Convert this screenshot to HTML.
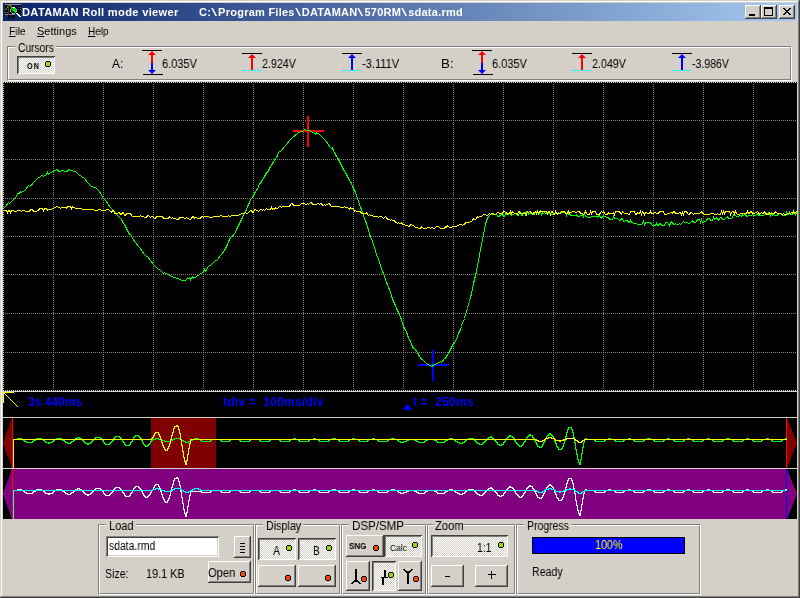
<!DOCTYPE html>
<html><head><meta charset="utf-8"><style>
html,body{margin:0;padding:0;width:800px;height:598px;overflow:hidden;background:#d4d0c8}
body>div,body>span,body>svg{position:absolute}
.t{position:absolute;font-family:"Liberation Sans",sans-serif;font-size:11px;line-height:13px;white-space:pre;color:#000;will-change:transform}
.dith{background:repeating-conic-gradient(#fff 0 25%,#d4d0c8 0 50%) 1px 0/2px 2px fixed}
u{text-decoration:underline;text-underline-offset:1px}
</style></head><body>
<div style="left:0px;top:0px;width:800px;height:598px;background:#d4d0c8;"></div><div style="left:1px;top:1px;width:797px;height:1px;background:#ffffff;"></div><div style="left:1px;top:1px;width:1px;height:596px;background:#ffffff;"></div><div style="left:799px;top:0px;width:1px;height:598px;background:#404040;"></div><div style="left:0px;top:597px;width:800px;height:1px;background:#404040;"></div><div style="left:798px;top:1px;width:1px;height:596px;background:#808080;"></div><div style="left:1px;top:596px;width:798px;height:1px;background:#808080;"></div><div style="left:3px;top:3px;width:794px;height:18px;background:linear-gradient(90deg,#0a246a,#a6caf0);"></div><span class="t" style="left:21.99px;top:6px;font-size:11px;color:#fff;font-weight:bold;letter-spacing:0.3px;transform:scaleX(1.0131);transform-origin:0 0;">DATAMAN Roll mode viewer</span><span class="t" style="left:199.00px;top:6px;font-size:11px;color:#fff;font-weight:bold;letter-spacing:0.25px;">C:<span style="display:inline-block;width:7px;text-align:center;font-weight:normal;transform:scaleX(1.9)">\</span>Program Files<span style="display:inline-block;width:7px;text-align:center;font-weight:normal;transform:scaleX(1.9)">\</span>DATAMAN<span style="display:inline-block;width:7px;text-align:center;font-weight:normal;transform:scaleX(1.9)">\</span>570RM<span style="display:inline-block;width:7px;text-align:center;font-weight:normal;transform:scaleX(1.9)">\</span>sdata.rmd</span><svg style="left:5px;top:4px" width="16" height="16" viewBox="0 0 16 16" shape-rendering="crispEdges"><rect x="0" y="0" width="16" height="1" fill="#8c8c84"/><rect x="0" y="1" width="16" height="9" fill="#000"/><rect x="0" y="10" width="10" height="1" fill="#8c8c84"/><rect x="13" y="3" width="1" height="1" fill="#606060"/><rect x="15" y="3" width="1" height="1" fill="#606060"/><rect x="13" y="5" width="1" height="1" fill="#606060"/><rect x="15" y="5" width="1" height="1" fill="#606060"/><rect x="0" y="8" width="1" height="1" fill="#606060"/><rect x="2" y="8" width="1" height="1" fill="#606060"/><rect x="3" y="1" width="1" height="10" fill="#c00000"/><rect x="11" y="1" width="1" height="4" fill="#0000c0"/><rect x="0" y="5" width="1" height="1" fill="#00b000"/><rect x="1" y="4" width="1" height="1" fill="#00b000"/><rect x="1" y="5" width="1" height="1" fill="#00b000"/><rect x="2" y="3" width="1" height="1" fill="#00b000"/><rect x="2" y="2" width="1" height="1" fill="#00b000"/><rect x="4" y="1" width="1" height="1" fill="#00b000"/><rect x="5" y="1" width="1" height="1" fill="#00b000"/><rect x="5" y="2" width="1" height="1" fill="#00b000"/><rect x="6" y="2" width="1" height="1" fill="#00b000"/><rect x="6" y="3" width="1" height="1" fill="#00b000"/><rect x="7" y="3" width="1" height="1" fill="#00b000"/><rect x="6" y="4" width="5" height="5" fill="#102010"/><rect x="5" y="5" width="7" height="3" fill="#102010"/><rect x="6" y="4" width="1" height="1" fill="#40c8c8"/><rect x="7" y="3" width="1" height="1" fill="#40c8c8"/><rect x="8" y="3" width="1" height="1" fill="#40c8c8"/><rect x="9" y="3" width="1" height="1" fill="#40c8c8"/><rect x="10" y="4" width="1" height="1" fill="#40c8c8"/><rect x="11" y="5" width="1" height="1" fill="#40c8c8"/><rect x="11" y="6" width="1" height="1" fill="#40c8c8"/><rect x="11" y="7" width="1" height="1" fill="#40c8c8"/><rect x="10" y="8" width="1" height="1" fill="#40c8c8"/><rect x="9" y="9" width="1" height="1" fill="#40c8c8"/><rect x="8" y="9" width="1" height="1" fill="#40c8c8"/><rect x="7" y="9" width="1" height="1" fill="#40c8c8"/><rect x="6" y="8" width="1" height="1" fill="#40c8c8"/><rect x="5" y="7" width="1" height="1" fill="#40c8c8"/><rect x="5" y="6" width="1" height="1" fill="#40c8c8"/><rect x="5" y="5" width="1" height="1" fill="#40c8c8"/><rect x="7" y="3" width="3" height="1" fill="#e0f0f0"/><rect x="8" y="4" width="3" height="2" fill="#00ff00"/><rect x="7" y="5" width="4" height="2" fill="#00e000"/><rect x="9" y="7" width="2" height="1" fill="#00ff00"/><rect x="11" y="9" width="1" height="1" fill="#ffffff"/><rect x="12" y="10" width="1" height="1" fill="#ffffff"/><rect x="13" y="11" width="1" height="1" fill="#ffffff"/><rect x="14" y="12" width="1" height="1" fill="#ffffff"/><rect x="12" y="9" width="1" height="1" fill="#ffffff"/><rect x="13" y="10" width="1" height="1" fill="#ffffff"/><rect x="14" y="11" width="1" height="1" fill="#ffffff"/><rect x="15" y="12" width="1" height="1" fill="#ffffff"/><rect x="3" y="11" width="1" height="1" fill="#000"/><rect x="3" y="12" width="1" height="1" fill="#000"/><rect x="3" y="13" width="1" height="1" fill="#000"/><rect x="3" y="14" width="1" height="1" fill="#000"/><rect x="4" y="11" width="1" height="1" fill="#000"/><rect x="5" y="11" width="1" height="1" fill="#000"/><rect x="5" y="12" width="1" height="1" fill="#000"/><rect x="4" y="13" width="1" height="1" fill="#000"/><rect x="5" y="14" width="1" height="1" fill="#000"/><rect x="4" y="12" width="1" height="1" fill="#000"/><rect x="7" y="11" width="1" height="1" fill="#000"/><rect x="7" y="12" width="1" height="1" fill="#000"/><rect x="7" y="13" width="1" height="1" fill="#000"/><rect x="7" y="14" width="1" height="1" fill="#000"/><rect x="8" y="12" width="1" height="1" fill="#000"/><rect x="9" y="11" width="1" height="1" fill="#000"/><rect x="9" y="12" width="1" height="1" fill="#000"/><rect x="9" y="13" width="1" height="1" fill="#000"/><rect x="9" y="14" width="1" height="1" fill="#000"/><rect x="8" y="11" width="1" height="1" fill="#000"/></svg><div style="left:745px;top:5px;width:16px;height:14px;background:#d4d0c8;box-shadow:inset -1px -1px #404040,inset 1px 1px #ffffff,inset -2px -2px #808080;"></div><div style="left:761px;top:5px;width:16px;height:14px;background:#d4d0c8;box-shadow:inset -1px -1px #404040,inset 1px 1px #ffffff,inset -2px -2px #808080;"></div><div style="left:779px;top:5px;width:16px;height:14px;background:#d4d0c8;box-shadow:inset -1px -1px #404040,inset 1px 1px #ffffff,inset -2px -2px #808080;"></div><div style="left:749px;top:14px;width:6px;height:2px;background:#000;"></div><div style="left:764px;top:7px;width:9px;height:9px;box-sizing:border-box;border:1px solid #000;border-top-width:2px"></div><svg style="left:783px;top:8px" width="8" height="7" viewBox="0 0 8 7" fill="#000"><rect x="0" y="0" width="1" height="1"/><rect x="1" y="0" width="1" height="1"/><rect x="6" y="0" width="1" height="1"/><rect x="7" y="0" width="1" height="1"/><rect x="1" y="1" width="1" height="1"/><rect x="2" y="1" width="1" height="1"/><rect x="5" y="1" width="1" height="1"/><rect x="6" y="1" width="1" height="1"/><rect x="2" y="2" width="1" height="1"/><rect x="3" y="2" width="1" height="1"/><rect x="4" y="2" width="1" height="1"/><rect x="5" y="2" width="1" height="1"/><rect x="3" y="3" width="1" height="1"/><rect x="4" y="3" width="1" height="1"/><rect x="2" y="4" width="1" height="1"/><rect x="3" y="4" width="1" height="1"/><rect x="4" y="4" width="1" height="1"/><rect x="5" y="4" width="1" height="1"/><rect x="1" y="5" width="1" height="1"/><rect x="2" y="5" width="1" height="1"/><rect x="5" y="5" width="1" height="1"/><rect x="6" y="5" width="1" height="1"/><rect x="0" y="6" width="1" height="1"/><rect x="1" y="6" width="1" height="1"/><rect x="6" y="6" width="1" height="1"/><rect x="7" y="6" width="1" height="1"/></svg><span class="t" style="left:9.00px;top:25px;font-size:11px;transform:scaleX(0.9412);transform-origin:0 0;"><u>F</u>ile</span><span class="t" style="left:37.00px;top:25px;font-size:11px;"><u>S</u>ettings</span><span class="t" style="left:88.00px;top:25px;font-size:11px;transform:scaleX(0.9091);transform-origin:0 0;"><u>H</u>elp</span><div style="left:7px;top:46px;width:785px;height:35px;box-sizing:border-box;border-top:1px solid #808080;border-left:1px solid #808080;border-bottom:1px solid #ffffff;border-right:1px solid #ffffff"></div><div style="left:8px;top:47px;width:783px;height:33px;box-sizing:border-box;border-top:1px solid #ffffff;border-left:1px solid #ffffff;border-bottom:1px solid #808080;border-right:1px solid #808080"></div><div style="left:15px;top:42px;width:41px;height:12px;background:#d4d0c8;"></div><span class="t" style="left:18.15px;top:42px;font-size:12px;transform:scaleX(0.8537);transform-origin:0 0;">Cursors</span><div class="dith" style="left:17px;top:56px;width:38px;height:18px;box-shadow:inset 1px 1px #404040,inset -1px -1px #ffffff,inset 2px 2px #808080;"></div><span class="t" style="left:27.00px;top:60px;font-size:9px;font-weight:bold;letter-spacing:1.5px;transform:scaleX(0.8000);transform-origin:0 0;">ON</span><div style="left:46px;top:62px;width:4px;height:4px;background:#99dd00;box-shadow:0 -1px #000,0 1px #000,-1px 0 #000,1px 0 #000"></div><span class="t" style="left:112.00px;top:58px;font-size:12px;">A:</span><svg style="left:142px;top:48px" width="22" height="28" viewBox="0 0 22 28"><rect x="0" y="2" width="20" height="1" fill="#000"/><rect x="1" y="26" width="20" height="1" fill="#000"/><path d="M10 3 L14 7 L6 7 Z" fill="#f00"/><rect x="9" y="6" width="2" height="9" fill="#f00"/><rect x="9" y="15" width="2" height="7" fill="#00f"/><path d="M10 26 L14 22 L6 22 Z" fill="#00f"/></svg><span class="t" style="left:162.08px;top:58px;font-size:12px;transform:scaleX(0.9189);transform-origin:0 0;">6.035V</span><svg style="left:242px;top:48px" width="22" height="28" viewBox="0 0 22 28"><rect x="0" y="5" width="20" height="1" fill="#000"/><path d="M10 6 L14 10 L6 10 Z" fill="#f00"/><rect x="9" y="9" width="2" height="13" fill="#f00"/><rect x="0" y="22" width="4" height="1" fill="#00ffff"/><rect x="5" y="22" width="4" height="1" fill="#00ffff"/><rect x="10" y="22" width="4" height="1" fill="#00ffff"/><rect x="15" y="22" width="4" height="1" fill="#00ffff"/></svg><span class="t" style="left:262.11px;top:58px;font-size:12px;transform:scaleX(0.8919);transform-origin:0 0;">2.924V</span><svg style="left:342px;top:48px" width="22" height="28" viewBox="0 0 22 28"><rect x="0" y="5" width="20" height="1" fill="#000"/><path d="M10 6 L14 10 L6 10 Z" fill="#00f"/><rect x="9" y="9" width="2" height="13" fill="#00f"/><rect x="0" y="22" width="4" height="1" fill="#00ffff"/><rect x="5" y="22" width="4" height="1" fill="#00ffff"/><rect x="10" y="22" width="4" height="1" fill="#00ffff"/><rect x="15" y="22" width="4" height="1" fill="#00ffff"/></svg><span class="t" style="left:362.08px;top:58px;font-size:12px;transform:scaleX(0.9231);transform-origin:0 0;">-3.111V</span><span class="t" style="left:440.89px;top:58px;font-size:12px;transform:scaleX(1.1111);transform-origin:0 0;">B:</span><svg style="left:472px;top:48px" width="22" height="28" viewBox="0 0 22 28"><rect x="0" y="2" width="20" height="1" fill="#000"/><rect x="1" y="26" width="20" height="1" fill="#000"/><path d="M10 3 L14 7 L6 7 Z" fill="#f00"/><rect x="9" y="6" width="2" height="9" fill="#f00"/><rect x="9" y="15" width="2" height="7" fill="#00f"/><path d="M10 26 L14 22 L6 22 Z" fill="#00f"/></svg><span class="t" style="left:492.08px;top:58px;font-size:12px;transform:scaleX(0.9189);transform-origin:0 0;">6.035V</span><svg style="left:572px;top:48px" width="22" height="28" viewBox="0 0 22 28"><rect x="0" y="5" width="20" height="1" fill="#000"/><path d="M10 6 L14 10 L6 10 Z" fill="#f00"/><rect x="9" y="9" width="2" height="13" fill="#f00"/><rect x="0" y="22" width="4" height="1" fill="#00ffff"/><rect x="5" y="22" width="4" height="1" fill="#00ffff"/><rect x="10" y="22" width="4" height="1" fill="#00ffff"/><rect x="15" y="22" width="4" height="1" fill="#00ffff"/></svg><span class="t" style="left:592.11px;top:58px;font-size:12px;transform:scaleX(0.8919);transform-origin:0 0;">2.049V</span><svg style="left:672px;top:48px" width="22" height="28" viewBox="0 0 22 28"><rect x="0" y="5" width="20" height="1" fill="#000"/><path d="M10 6 L14 10 L6 10 Z" fill="#00f"/><rect x="9" y="9" width="2" height="13" fill="#00f"/><rect x="0" y="22" width="4" height="1" fill="#00ffff"/><rect x="5" y="22" width="4" height="1" fill="#00ffff"/><rect x="10" y="22" width="4" height="1" fill="#00ffff"/><rect x="15" y="22" width="4" height="1" fill="#00ffff"/></svg><span class="t" style="left:692.12px;top:58px;font-size:12px;transform:scaleX(0.8780);transform-origin:0 0;">-3.986V</span><div style="left:3px;top:82px;width:794px;height:309px;background:#000"></div><div style="left:3px;top:82px;width:793px;height:1px;background:repeating-linear-gradient(90deg,#d4d0c8 0 1px,transparent 1px 2px)"></div><div style="left:3px;top:120px;width:793px;height:1px;background:repeating-linear-gradient(90deg,#808080 0 1px,transparent 1px 2px)"></div><div style="left:3px;top:159px;width:793px;height:1px;background:repeating-linear-gradient(90deg,#808080 0 1px,transparent 1px 2px)"></div><div style="left:3px;top:198px;width:793px;height:1px;background:repeating-linear-gradient(90deg,#808080 0 1px,transparent 1px 2px)"></div><div style="left:3px;top:236px;width:793px;height:1px;background:repeating-linear-gradient(90deg,#808080 0 1px,transparent 1px 2px)"></div><div style="left:3px;top:274px;width:793px;height:1px;background:repeating-linear-gradient(90deg,#808080 0 1px,transparent 1px 2px)"></div><div style="left:3px;top:313px;width:793px;height:1px;background:repeating-linear-gradient(90deg,#808080 0 1px,transparent 1px 2px)"></div><div style="left:3px;top:352px;width:793px;height:1px;background:repeating-linear-gradient(90deg,#808080 0 1px,transparent 1px 2px)"></div><div style="left:3px;top:390px;width:793px;height:1px;background:repeating-linear-gradient(90deg,#d4d0c8 0 1px,transparent 1px 2px)"></div><div style="left:3px;top:82px;width:1px;height:308px;background:repeating-linear-gradient(180deg,#c0c0c0 0 1px,transparent 1px 2px)"></div><div style="left:53px;top:82px;width:1px;height:308px;background:repeating-linear-gradient(180deg,#808080 0 1px,transparent 1px 2px)"></div><div style="left:103px;top:82px;width:1px;height:308px;background:repeating-linear-gradient(180deg,#808080 0 1px,transparent 1px 2px)"></div><div style="left:153px;top:82px;width:1px;height:308px;background:repeating-linear-gradient(180deg,#808080 0 1px,transparent 1px 2px)"></div><div style="left:203px;top:82px;width:1px;height:308px;background:repeating-linear-gradient(180deg,#808080 0 1px,transparent 1px 2px)"></div><div style="left:253px;top:82px;width:1px;height:308px;background:repeating-linear-gradient(180deg,#808080 0 1px,transparent 1px 2px)"></div><div style="left:303px;top:82px;width:1px;height:308px;background:repeating-linear-gradient(180deg,#808080 0 1px,transparent 1px 2px)"></div><div style="left:353px;top:82px;width:1px;height:308px;background:repeating-linear-gradient(180deg,#808080 0 1px,transparent 1px 2px)"></div><div style="left:403px;top:82px;width:1px;height:308px;background:repeating-linear-gradient(180deg,#808080 0 1px,transparent 1px 2px)"></div><div style="left:453px;top:82px;width:1px;height:308px;background:repeating-linear-gradient(180deg,#808080 0 1px,transparent 1px 2px)"></div><div style="left:503px;top:82px;width:1px;height:308px;background:repeating-linear-gradient(180deg,#808080 0 1px,transparent 1px 2px)"></div><div style="left:553px;top:82px;width:1px;height:308px;background:repeating-linear-gradient(180deg,#808080 0 1px,transparent 1px 2px)"></div><div style="left:603px;top:82px;width:1px;height:308px;background:repeating-linear-gradient(180deg,#808080 0 1px,transparent 1px 2px)"></div><div style="left:653px;top:82px;width:1px;height:308px;background:repeating-linear-gradient(180deg,#808080 0 1px,transparent 1px 2px)"></div><div style="left:703px;top:82px;width:1px;height:308px;background:repeating-linear-gradient(180deg,#808080 0 1px,transparent 1px 2px)"></div><div style="left:753px;top:82px;width:1px;height:308px;background:repeating-linear-gradient(180deg,#808080 0 1px,transparent 1px 2px)"></div><svg style="left:0;top:0" width="800" height="420" viewBox="0 0 800 420"><rect x="307" y="116" width="2" height="31" fill="#ff0000"/><rect x="293" y="130" width="31" height="2" fill="#ff0000"/><rect x="432" y="350" width="2" height="31" fill="#0000ff"/><rect x="418" y="364" width="31" height="2" fill="#0000ff"/><clipPath id="sc"><rect x="3" y="82" width="794" height="308"/></clipPath><g clip-path="url(#sc)"><polyline points="3.5,208.5 4.5,207.5 5.5,206.5 6.5,205.5 7.5,203.5 8.5,202.5 9.5,203.5 10.5,202.5 11.5,201.5 12.5,200.5 13.5,199.5 14.5,198.5 15.5,197.5 16.5,196.5 17.5,193.5 18.5,193.5 19.5,193.5 20.5,191.5 21.5,192.5 22.5,191.5 23.5,191.5 24.5,190.5 25.5,189.5 26.5,188.5 27.5,186.5 28.5,185.5 29.5,186.5 30.5,185.5 31.5,185.5 32.5,183.5 33.5,182.5 34.5,181.5 35.5,180.5 36.5,179.5 37.5,178.5 38.5,177.5 39.5,177.5 40.5,176.5 41.5,175.5 42.5,175.5 43.5,176.5 44.5,175.5 45.5,175.5 46.5,174.5 47.5,172.5 48.5,174.5 49.5,173.5 50.5,172.5 51.5,172.5 52.5,171.5 53.5,171.5 54.5,170.5 55.5,170.5 56.5,169.5 57.5,169.5 58.5,171.5 59.5,171.5 60.5,171.5 61.5,170.5 62.5,170.5 63.5,170.5 64.5,171.5 65.5,171.5 66.5,171.5 67.5,171.5 68.5,169.5 69.5,169.5 70.5,170.5 71.5,170.5 72.5,170.5 73.5,171.5 74.5,171.5 75.5,171.5 76.5,172.5 77.5,173.5 78.5,174.5 79.5,175.5 80.5,175.5 81.5,176.5 82.5,177.5 83.5,177.5 84.5,178.5 85.5,179.5 86.5,181.5 87.5,182.5 88.5,183.5 89.5,184.5 90.5,185.5 91.5,186.5 92.5,186.5 93.5,187.5 94.5,187.5 95.5,187.5 96.5,188.5 97.5,189.5 98.5,190.5 99.5,191.5 100.5,193.5 101.5,194.5 102.5,197.5 103.5,198.5 104.5,199.5 105.5,200.5 106.5,201.5 107.5,203.5 108.5,204.5 109.5,206.5 110.5,207.5 111.5,208.5 112.5,209.5 113.5,210.5 114.5,211.5 115.5,212.5 116.5,214.5 117.5,215.5 118.5,216.5 119.5,217.5 120.5,218.5 121.5,219.5 122.5,221.5 123.5,223.5 124.5,224.5 125.5,226.5 126.5,228.5 127.5,230.5 128.5,232.5 129.5,234.5 130.5,234.5 131.5,235.5 132.5,238.5 133.5,239.5 134.5,241.5 135.5,242.5 136.5,243.5 137.5,245.5 138.5,246.5 139.5,247.5 140.5,248.5 141.5,250.5 142.5,251.5 143.5,253.5 144.5,254.5 145.5,255.5 146.5,256.5 147.5,256.5 148.5,257.5 149.5,259.5 150.5,260.5 151.5,261.5 152.5,263.5 153.5,264.5 154.5,265.5 155.5,266.5 156.5,267.5 157.5,268.5 158.5,269.5 159.5,269.5 160.5,270.5 161.5,271.5 162.5,272.5 163.5,273.5 164.5,272.5 165.5,273.5 166.5,273.5 167.5,274.5 168.5,274.5 169.5,275.5 170.5,275.5 171.5,276.5 172.5,276.5 173.5,277.5 174.5,277.5 175.5,277.5 176.5,278.5 177.5,278.5 178.5,278.5 179.5,279.5 180.5,279.5 181.5,280.5 182.5,280.5 183.5,280.5 184.5,280.5 185.5,280.5 186.5,279.5 187.5,278.5 188.5,278.5 189.5,277.5 190.5,279.5 191.5,277.5 192.5,276.5 193.5,278.5 194.5,277.5 195.5,277.5 196.5,276.5 197.5,275.5 198.5,275.5 199.5,274.5 200.5,273.5 201.5,273.5 202.5,272.5 203.5,271.5 204.5,269.5 205.5,271.5 206.5,270.5 207.5,267.5 208.5,266.5 209.5,265.5 210.5,265.5 211.5,264.5 212.5,263.5 213.5,262.5 214.5,261.5 215.5,260.5 216.5,260.5 217.5,259.5 218.5,258.5 219.5,256.5 220.5,255.5 221.5,254.5 222.5,253.5 223.5,251.5 224.5,250.5 225.5,248.5 226.5,246.5 227.5,244.5 228.5,241.5 229.5,239.5 230.5,237.5 231.5,236.5 232.5,236.5 233.5,234.5 234.5,233.5 235.5,232.5 236.5,229.5 237.5,227.5 238.5,225.5 239.5,223.5 240.5,221.5 241.5,219.5 242.5,217.5 243.5,214.5 244.5,212.5 245.5,211.5 246.5,209.5 247.5,206.5 248.5,204.5 249.5,202.5 250.5,199.5 251.5,198.5 252.5,197.5 253.5,195.5 254.5,193.5 255.5,191.5 256.5,190.5 257.5,188.5 258.5,187.5 259.5,183.5 260.5,183.5 261.5,181.5 262.5,179.5 263.5,178.5 264.5,176.5 265.5,174.5 266.5,172.5 267.5,172.5 268.5,170.5 269.5,168.5 270.5,166.5 271.5,165.5 272.5,163.5 273.5,161.5 274.5,160.5 275.5,158.5 276.5,157.5 277.5,155.5 278.5,152.5 279.5,151.5 280.5,151.5 281.5,150.5 282.5,149.5 283.5,147.5 284.5,146.5 285.5,145.5 286.5,144.5 287.5,143.5 288.5,141.5 289.5,140.5 290.5,139.5 291.5,138.5 292.5,137.5 293.5,136.5 294.5,136.5 295.5,134.5 296.5,134.5 297.5,133.5 298.5,132.5 299.5,132.5 300.5,131.5 301.5,131.5 302.5,131.5 303.5,130.5 304.5,129.5 305.5,129.5 306.5,130.5 307.5,130.5 308.5,130.5 309.5,130.5 310.5,131.5 311.5,131.5 312.5,132.5 313.5,132.5 314.5,133.5 315.5,134.5 316.5,132.5 317.5,133.5 318.5,133.5 319.5,134.5 320.5,135.5 321.5,136.5 322.5,137.5 323.5,138.5 324.5,139.5 325.5,140.5 326.5,141.5 327.5,143.5 328.5,144.5 329.5,146.5 330.5,147.5 331.5,148.5 332.5,147.5 333.5,151.5 334.5,152.5 335.5,154.5 336.5,156.5 337.5,157.5 338.5,159.5 339.5,161.5 340.5,163.5 341.5,165.5 342.5,167.5 343.5,169.5 344.5,171.5 345.5,172.5 346.5,174.5 347.5,176.5 348.5,178.5 349.5,180.5 350.5,181.5 351.5,183.5 352.5,186.5 353.5,188.5 354.5,190.5 355.5,192.5 356.5,195.5 357.5,198.5 358.5,201.5 359.5,204.5 360.5,207.5 361.5,209.5 362.5,212.5 363.5,215.5 364.5,218.5 365.5,221.5 366.5,223.5 367.5,226.5 368.5,230.5 369.5,233.5 370.5,237.5 371.5,238.5 372.5,241.5 373.5,244.5 374.5,247.5 375.5,250.5 376.5,255.5 377.5,256.5 378.5,259.5 379.5,262.5 380.5,265.5 381.5,268.5 382.5,271.5 383.5,273.5 384.5,276.5 385.5,279.5 386.5,282.5 387.5,284.5 388.5,287.5 389.5,289.5 390.5,292.5 391.5,295.5 392.5,299.5 393.5,301.5 394.5,303.5 395.5,305.5 396.5,308.5 397.5,310.5 398.5,312.5 399.5,314.5 400.5,317.5 401.5,319.5 402.5,324.5 403.5,325.5 404.5,329.5 405.5,329.5 406.5,332.5 407.5,334.5 408.5,338.5 409.5,339.5 410.5,341.5 411.5,344.5 412.5,346.5 413.5,348.5 414.5,348.5 415.5,349.5 416.5,351.5 417.5,352.5 418.5,354.5 419.5,356.5 420.5,357.5 421.5,359.5 422.5,359.5 423.5,360.5 424.5,361.5 425.5,362.5 426.5,363.5 427.5,364.5 428.5,364.5 429.5,365.5 430.5,365.5 431.5,366.5 432.5,366.5 433.5,364.5 434.5,364.5 435.5,364.5 436.5,363.5 437.5,363.5 438.5,362.5 439.5,362.5 440.5,361.5 441.5,362.5 442.5,361.5 443.5,359.5 444.5,358.5 445.5,358.5 446.5,356.5 447.5,354.5 448.5,353.5 449.5,351.5 450.5,349.5 451.5,347.5 452.5,345.5 453.5,343.5 454.5,343.5 455.5,340.5 456.5,339.5 457.5,336.5 458.5,333.5 459.5,331.5 460.5,329.5 461.5,326.5 462.5,322.5 463.5,321.5 464.5,318.5 465.5,314.5 466.5,311.5 467.5,308.5 468.5,304.5 469.5,301.5 470.5,297.5 471.5,293.5 472.5,288.5 473.5,283.5 474.5,279.5 475.5,275.5 476.5,271.5 477.5,265.5 478.5,260.5 479.5,255.5 480.5,249.5 481.5,244.5 482.5,239.5 483.5,234.5 484.5,229.5 485.5,224.5 486.5,220.5 487.5,218.5 488.5,216.5 489.5,215.5 490.5,214.5 491.5,214.5 492.5,214.5 493.5,214.5 494.5,214.5 495.5,214.5 496.5,213.5 497.5,216.5 498.5,216.5 499.5,216.5 500.5,214.5 501.5,214.5 502.5,214.5 503.5,216.5 504.5,216.5 505.5,213.5 506.5,214.5 507.5,214.5 508.5,214.5 509.5,213.5 510.5,213.5 511.5,215.5 512.5,214.5 513.5,214.5 514.5,213.5 515.5,213.5 516.5,214.5 517.5,215.5 518.5,215.5 519.5,212.5 520.5,212.5 521.5,215.5 522.5,215.5 523.5,212.5 524.5,212.5 525.5,214.5 526.5,211.5 527.5,211.5 528.5,214.5 529.5,213.5 530.5,213.5 531.5,213.5 532.5,213.5 533.5,214.5 534.5,214.5 535.5,211.5 536.5,211.5 537.5,211.5 538.5,213.5 539.5,213.5 540.5,211.5 541.5,214.5 542.5,212.5 543.5,213.5 544.5,212.5 545.5,213.5 546.5,213.5 547.5,213.5 548.5,213.5 549.5,213.5 550.5,214.5 551.5,214.5 552.5,214.5 553.5,214.5 554.5,214.5 555.5,213.5 556.5,213.5 557.5,214.5 558.5,212.5 559.5,213.5 560.5,213.5 561.5,212.5 562.5,212.5 563.5,212.5 564.5,211.5 565.5,212.5 566.5,215.5 567.5,212.5 568.5,214.5 569.5,213.5 570.5,215.5 571.5,215.5 572.5,215.5 573.5,215.5 574.5,215.5 575.5,215.5 576.5,214.5 577.5,216.5 578.5,216.5 579.5,216.5 580.5,215.5 581.5,215.5 582.5,214.5 583.5,216.5 584.5,213.5 585.5,216.5 586.5,216.5 587.5,217.5 588.5,217.5 589.5,217.5 590.5,217.5 591.5,216.5 592.5,216.5 593.5,216.5 594.5,216.5 595.5,216.5 596.5,216.5 597.5,217.5 598.5,215.5 599.5,215.5 600.5,217.5 601.5,218.5 602.5,216.5 603.5,215.5 604.5,216.5 605.5,216.5 606.5,217.5 607.5,217.5 608.5,217.5 609.5,219.5 610.5,219.5 611.5,219.5 612.5,219.5 613.5,216.5 614.5,218.5 615.5,218.5 616.5,218.5 617.5,218.5 618.5,219.5 619.5,220.5 620.5,220.5 621.5,218.5 622.5,218.5 623.5,221.5 624.5,221.5 625.5,220.5 626.5,220.5 627.5,220.5 628.5,222.5 629.5,222.5 630.5,220.5 631.5,222.5 632.5,222.5 633.5,223.5 634.5,223.5 635.5,223.5 636.5,223.5 637.5,224.5 638.5,224.5 639.5,224.5 640.5,224.5 641.5,224.5 642.5,223.5 643.5,221.5 644.5,224.5 645.5,222.5 646.5,222.5 647.5,222.5 648.5,222.5 649.5,222.5 650.5,222.5 651.5,224.5 652.5,225.5 653.5,225.5 654.5,225.5 655.5,225.5 656.5,223.5 657.5,225.5 658.5,225.5 659.5,223.5 660.5,223.5 661.5,225.5 662.5,225.5 663.5,225.5 664.5,225.5 665.5,222.5 666.5,222.5 667.5,222.5 668.5,223.5 669.5,225.5 670.5,223.5 671.5,221.5 672.5,222.5 673.5,224.5 674.5,224.5 675.5,223.5 676.5,224.5 677.5,224.5 678.5,224.5 679.5,223.5 680.5,224.5 681.5,223.5 682.5,222.5 683.5,221.5 684.5,222.5 685.5,222.5 686.5,222.5 687.5,222.5 688.5,223.5 689.5,223.5 690.5,222.5 691.5,221.5 692.5,220.5 693.5,222.5 694.5,222.5 695.5,222.5 696.5,221.5 697.5,219.5 698.5,219.5 699.5,219.5 700.5,222.5 701.5,219.5 702.5,222.5 703.5,222.5 704.5,221.5 705.5,221.5 706.5,220.5 707.5,218.5 708.5,218.5 709.5,218.5 710.5,220.5 711.5,220.5 712.5,220.5 713.5,217.5 714.5,219.5 715.5,218.5 716.5,217.5 717.5,219.5 718.5,220.5 719.5,218.5 720.5,217.5 721.5,217.5 722.5,219.5 723.5,219.5 724.5,219.5 725.5,218.5 726.5,217.5 727.5,216.5 728.5,218.5 729.5,218.5 730.5,218.5 731.5,218.5 732.5,217.5 733.5,214.5 734.5,215.5 735.5,215.5 736.5,216.5 737.5,216.5 738.5,216.5 739.5,215.5 740.5,215.5 741.5,216.5 742.5,214.5 743.5,215.5 744.5,214.5 745.5,214.5 746.5,216.5 747.5,216.5 748.5,215.5 749.5,215.5 750.5,215.5 751.5,215.5 752.5,214.5 753.5,215.5 754.5,215.5 755.5,215.5 756.5,214.5 757.5,213.5 758.5,215.5 759.5,215.5 760.5,215.5 761.5,215.5 762.5,215.5 763.5,215.5 764.5,214.5 765.5,214.5 766.5,214.5 767.5,214.5 768.5,212.5 769.5,213.5 770.5,215.5 771.5,213.5 772.5,215.5 773.5,214.5 774.5,215.5 775.5,215.5 776.5,215.5 777.5,215.5 778.5,213.5 779.5,213.5 780.5,213.5 781.5,213.5 782.5,215.5 783.5,215.5 784.5,215.5 785.5,215.5 786.5,212.5 787.5,214.5 788.5,214.5 789.5,212.5 790.5,214.5 791.5,214.5 792.5,214.5 793.5,212.5 794.5,212.5 795.5,214.5 796.5,212.5" fill="none" stroke="#00ff00" stroke-width="1" shape-rendering="crispEdges"/><polyline points="3.5,211.5 4.5,210.5 5.5,210.5 6.5,210.5 7.5,212.5 8.5,210.5 9.5,210.5 10.5,212.5 11.5,210.5 12.5,210.5 13.5,210.5 14.5,211.5 15.5,211.5 16.5,211.5 17.5,210.5 18.5,210.5 19.5,210.5 20.5,210.5 21.5,211.5 22.5,210.5 23.5,210.5 24.5,210.5 25.5,211.5 26.5,211.5 27.5,211.5 28.5,211.5 29.5,211.5 30.5,209.5 31.5,209.5 32.5,209.5 33.5,211.5 34.5,211.5 35.5,211.5 36.5,211.5 37.5,210.5 38.5,210.5 39.5,208.5 40.5,208.5 41.5,208.5 42.5,208.5 43.5,210.5 44.5,208.5 45.5,208.5 46.5,208.5 47.5,210.5 48.5,209.5 49.5,209.5 50.5,209.5 51.5,209.5 52.5,208.5 53.5,208.5 54.5,207.5 55.5,207.5 56.5,206.5 57.5,206.5 58.5,207.5 59.5,207.5 60.5,208.5 61.5,207.5 62.5,207.5 63.5,207.5 64.5,207.5 65.5,207.5 66.5,208.5 67.5,206.5 68.5,206.5 69.5,206.5 70.5,206.5 71.5,208.5 72.5,206.5 73.5,207.5 74.5,207.5 75.5,208.5 76.5,208.5 77.5,208.5 78.5,208.5 79.5,208.5 80.5,208.5 81.5,208.5 82.5,209.5 83.5,209.5 84.5,209.5 85.5,209.5 86.5,209.5 87.5,209.5 88.5,209.5 89.5,209.5 90.5,209.5 91.5,209.5 92.5,209.5 93.5,209.5 94.5,210.5 95.5,210.5 96.5,210.5 97.5,210.5 98.5,209.5 99.5,209.5 100.5,209.5 101.5,210.5 102.5,210.5 103.5,210.5 104.5,210.5 105.5,210.5 106.5,209.5 107.5,209.5 108.5,209.5 109.5,210.5 110.5,211.5 111.5,212.5 112.5,210.5 113.5,210.5 114.5,213.5 115.5,213.5 116.5,213.5 117.5,213.5 118.5,212.5 119.5,212.5 120.5,214.5 121.5,214.5 122.5,212.5 123.5,212.5 124.5,215.5 125.5,215.5 126.5,213.5 127.5,213.5 128.5,213.5 129.5,213.5 130.5,213.5 131.5,215.5 132.5,216.5 133.5,216.5 134.5,216.5 135.5,216.5 136.5,216.5 137.5,216.5 138.5,216.5 139.5,216.5 140.5,215.5 141.5,216.5 142.5,216.5 143.5,216.5 144.5,217.5 145.5,217.5 146.5,217.5 147.5,215.5 148.5,215.5 149.5,216.5 150.5,217.5 151.5,216.5 152.5,216.5 153.5,217.5 154.5,218.5 155.5,218.5 156.5,216.5 157.5,216.5 158.5,216.5 159.5,216.5 160.5,216.5 161.5,216.5 162.5,216.5 163.5,218.5 164.5,218.5 165.5,218.5 166.5,218.5 167.5,218.5 168.5,218.5 169.5,216.5 170.5,217.5 171.5,218.5 172.5,217.5 173.5,218.5 174.5,218.5 175.5,218.5 176.5,219.5 177.5,219.5 178.5,219.5 179.5,217.5 180.5,217.5 181.5,217.5 182.5,217.5 183.5,217.5 184.5,218.5 185.5,218.5 186.5,217.5 187.5,218.5 188.5,218.5 189.5,219.5 190.5,219.5 191.5,218.5 192.5,216.5 193.5,216.5 194.5,218.5 195.5,217.5 196.5,217.5 197.5,218.5 198.5,218.5 199.5,218.5 200.5,218.5 201.5,216.5 202.5,216.5 203.5,217.5 204.5,216.5 205.5,216.5 206.5,216.5 207.5,216.5 208.5,216.5 209.5,217.5 210.5,217.5 211.5,217.5 212.5,217.5 213.5,216.5 214.5,216.5 215.5,216.5 216.5,216.5 217.5,216.5 218.5,216.5 219.5,216.5 220.5,215.5 221.5,215.5 222.5,216.5 223.5,216.5 224.5,216.5 225.5,216.5 226.5,216.5 227.5,216.5 228.5,215.5 229.5,216.5 230.5,216.5 231.5,215.5 232.5,215.5 233.5,215.5 234.5,215.5 235.5,215.5 236.5,215.5 237.5,215.5 238.5,215.5 239.5,214.5 240.5,214.5 241.5,213.5 242.5,213.5 243.5,213.5 244.5,213.5 245.5,212.5 246.5,213.5 247.5,213.5 248.5,212.5 249.5,211.5 250.5,210.5 251.5,210.5 252.5,212.5 253.5,212.5 254.5,209.5 255.5,209.5 256.5,210.5 257.5,210.5 258.5,211.5 259.5,210.5 260.5,209.5 261.5,209.5 262.5,210.5 263.5,209.5 264.5,210.5 265.5,209.5 266.5,208.5 267.5,209.5 268.5,209.5 269.5,209.5 270.5,209.5 271.5,207.5 272.5,209.5 273.5,208.5 274.5,209.5 275.5,207.5 276.5,208.5 277.5,208.5 278.5,207.5 279.5,206.5 280.5,206.5 281.5,207.5 282.5,206.5 283.5,206.5 284.5,206.5 285.5,206.5 286.5,206.5 287.5,206.5 288.5,206.5 289.5,206.5 290.5,204.5 291.5,203.5 292.5,203.5 293.5,205.5 294.5,205.5 295.5,205.5 296.5,205.5 297.5,205.5 298.5,205.5 299.5,205.5 300.5,204.5 301.5,203.5 302.5,203.5 303.5,203.5 304.5,203.5 305.5,204.5 306.5,204.5 307.5,203.5 308.5,204.5 309.5,203.5 310.5,202.5 311.5,202.5 312.5,204.5 313.5,204.5 314.5,204.5 315.5,204.5 316.5,204.5 317.5,203.5 318.5,203.5 319.5,204.5 320.5,203.5 321.5,203.5 322.5,205.5 323.5,205.5 324.5,204.5 325.5,205.5 326.5,204.5 327.5,204.5 328.5,203.5 329.5,203.5 330.5,205.5 331.5,206.5 332.5,206.5 333.5,206.5 334.5,206.5 335.5,206.5 336.5,206.5 337.5,206.5 338.5,206.5 339.5,206.5 340.5,207.5 341.5,207.5 342.5,207.5 343.5,207.5 344.5,206.5 345.5,207.5 346.5,207.5 347.5,207.5 348.5,208.5 349.5,209.5 350.5,207.5 351.5,208.5 352.5,208.5 353.5,208.5 354.5,211.5 355.5,210.5 356.5,211.5 357.5,211.5 358.5,211.5 359.5,211.5 360.5,211.5 361.5,213.5 362.5,213.5 363.5,213.5 364.5,213.5 365.5,213.5 366.5,212.5 367.5,214.5 368.5,215.5 369.5,214.5 370.5,215.5 371.5,215.5 372.5,215.5 373.5,216.5 374.5,216.5 375.5,216.5 376.5,216.5 377.5,216.5 378.5,217.5 379.5,216.5 380.5,216.5 381.5,216.5 382.5,217.5 383.5,218.5 384.5,217.5 385.5,216.5 386.5,217.5 387.5,219.5 388.5,219.5 389.5,219.5 390.5,220.5 391.5,219.5 392.5,220.5 393.5,220.5 394.5,220.5 395.5,222.5 396.5,222.5 397.5,223.5 398.5,222.5 399.5,223.5 400.5,223.5 401.5,222.5 402.5,224.5 403.5,224.5 404.5,224.5 405.5,225.5 406.5,225.5 407.5,225.5 408.5,226.5 409.5,226.5 410.5,224.5 411.5,224.5 412.5,225.5 413.5,225.5 414.5,226.5 415.5,227.5 416.5,227.5 417.5,227.5 418.5,228.5 419.5,228.5 420.5,228.5 421.5,226.5 422.5,227.5 423.5,228.5 424.5,228.5 425.5,228.5 426.5,228.5 427.5,227.5 428.5,227.5 429.5,227.5 430.5,228.5 431.5,227.5 432.5,227.5 433.5,228.5 434.5,228.5 435.5,227.5 436.5,226.5 437.5,226.5 438.5,226.5 439.5,227.5 440.5,228.5 441.5,228.5 442.5,228.5 443.5,228.5 444.5,228.5 445.5,226.5 446.5,227.5 447.5,225.5 448.5,226.5 449.5,227.5 450.5,227.5 451.5,227.5 452.5,226.5 453.5,226.5 454.5,226.5 455.5,226.5 456.5,226.5 457.5,225.5 458.5,225.5 459.5,224.5 460.5,224.5 461.5,224.5 462.5,225.5 463.5,224.5 464.5,224.5 465.5,222.5 466.5,222.5 467.5,222.5 468.5,222.5 469.5,222.5 470.5,221.5 471.5,221.5 472.5,220.5 473.5,218.5 474.5,219.5 475.5,219.5 476.5,218.5 477.5,216.5 478.5,217.5 479.5,216.5 480.5,216.5 481.5,216.5 482.5,215.5 483.5,214.5 484.5,214.5 485.5,214.5 486.5,215.5 487.5,215.5 488.5,214.5 489.5,213.5 490.5,214.5 491.5,213.5 492.5,213.5 493.5,213.5 494.5,214.5 495.5,214.5 496.5,213.5 497.5,212.5 498.5,212.5 499.5,213.5 500.5,213.5 501.5,213.5 502.5,213.5 503.5,211.5 504.5,211.5 505.5,212.5 506.5,212.5 507.5,214.5 508.5,213.5 509.5,213.5 510.5,211.5 511.5,213.5 512.5,211.5 513.5,212.5 514.5,213.5 515.5,213.5 516.5,213.5 517.5,214.5 518.5,211.5 519.5,211.5 520.5,213.5 521.5,213.5 522.5,213.5 523.5,213.5 524.5,213.5 525.5,212.5 526.5,214.5 527.5,211.5 528.5,212.5 529.5,211.5 530.5,211.5 531.5,213.5 532.5,214.5 533.5,212.5 534.5,212.5 535.5,211.5 536.5,213.5 537.5,211.5 538.5,213.5 539.5,211.5 540.5,211.5 541.5,211.5 542.5,211.5 543.5,211.5 544.5,211.5 545.5,211.5 546.5,211.5 547.5,213.5 548.5,211.5 549.5,211.5 550.5,214.5 551.5,211.5 552.5,211.5 553.5,214.5 554.5,214.5 555.5,211.5 556.5,213.5 557.5,213.5 558.5,213.5 559.5,213.5 560.5,213.5 561.5,211.5 562.5,211.5 563.5,211.5 564.5,211.5 565.5,213.5 566.5,213.5 567.5,213.5 568.5,211.5 569.5,213.5 570.5,212.5 571.5,212.5 572.5,211.5 573.5,211.5 574.5,211.5 575.5,212.5 576.5,212.5 577.5,211.5 578.5,211.5 579.5,211.5 580.5,213.5 581.5,213.5 582.5,213.5 583.5,214.5 584.5,213.5 585.5,211.5 586.5,213.5 587.5,214.5 588.5,214.5 589.5,214.5 590.5,211.5 591.5,213.5 592.5,211.5 593.5,211.5 594.5,211.5 595.5,211.5 596.5,214.5 597.5,214.5 598.5,214.5 599.5,214.5 600.5,212.5 601.5,211.5 602.5,212.5 603.5,211.5 604.5,213.5 605.5,214.5 606.5,214.5 607.5,214.5 608.5,212.5 609.5,213.5 610.5,213.5 611.5,213.5 612.5,213.5 613.5,212.5 614.5,214.5 615.5,211.5 616.5,211.5 617.5,211.5 618.5,211.5 619.5,211.5 620.5,213.5 621.5,214.5 622.5,211.5 623.5,212.5 624.5,213.5 625.5,213.5 626.5,213.5 627.5,213.5 628.5,214.5 629.5,214.5 630.5,211.5 631.5,211.5 632.5,211.5 633.5,211.5 634.5,211.5 635.5,214.5 636.5,214.5 637.5,212.5 638.5,213.5 639.5,213.5 640.5,211.5 641.5,214.5 642.5,211.5 643.5,212.5 644.5,214.5 645.5,212.5 646.5,212.5 647.5,213.5 648.5,213.5 649.5,213.5 650.5,211.5 651.5,213.5 652.5,213.5 653.5,213.5 654.5,212.5 655.5,212.5 656.5,213.5 657.5,213.5 658.5,213.5 659.5,211.5 660.5,211.5 661.5,211.5 662.5,211.5 663.5,211.5 664.5,214.5 665.5,214.5 666.5,214.5 667.5,213.5 668.5,213.5 669.5,213.5 670.5,212.5 671.5,212.5 672.5,213.5 673.5,211.5 674.5,211.5 675.5,213.5 676.5,213.5 677.5,213.5 678.5,213.5 679.5,212.5 680.5,212.5 681.5,214.5 682.5,212.5 683.5,214.5 684.5,211.5 685.5,211.5 686.5,211.5 687.5,213.5 688.5,214.5 689.5,214.5 690.5,212.5 691.5,212.5 692.5,213.5 693.5,214.5 694.5,213.5 695.5,213.5 696.5,213.5 697.5,213.5 698.5,213.5 699.5,213.5 700.5,212.5 701.5,211.5 702.5,213.5 703.5,213.5 704.5,214.5 705.5,214.5 706.5,214.5 707.5,214.5 708.5,214.5 709.5,214.5 710.5,213.5 711.5,213.5 712.5,213.5 713.5,213.5 714.5,214.5 715.5,214.5 716.5,214.5 717.5,213.5 718.5,214.5 719.5,214.5 720.5,214.5 721.5,211.5 722.5,213.5 723.5,211.5 724.5,213.5 725.5,211.5 726.5,211.5 727.5,211.5 728.5,211.5 729.5,211.5 730.5,214.5 731.5,212.5 732.5,211.5 733.5,211.5 734.5,213.5 735.5,211.5 736.5,213.5 737.5,214.5 738.5,214.5 739.5,214.5 740.5,213.5 741.5,213.5 742.5,213.5 743.5,213.5 744.5,213.5 745.5,213.5 746.5,213.5 747.5,211.5 748.5,213.5 749.5,213.5 750.5,211.5 751.5,211.5 752.5,213.5 753.5,213.5 754.5,213.5 755.5,212.5 756.5,212.5 757.5,211.5 758.5,212.5 759.5,214.5 760.5,213.5 761.5,212.5 762.5,213.5 763.5,213.5 764.5,211.5 765.5,212.5 766.5,214.5 767.5,214.5 768.5,214.5 769.5,212.5 770.5,213.5 771.5,213.5 772.5,213.5 773.5,213.5 774.5,213.5 775.5,211.5 776.5,212.5 777.5,213.5 778.5,213.5 779.5,213.5 780.5,213.5 781.5,214.5 782.5,214.5 783.5,213.5 784.5,214.5 785.5,214.5 786.5,214.5 787.5,213.5 788.5,213.5 789.5,212.5 790.5,213.5 791.5,212.5 792.5,213.5 793.5,211.5 794.5,213.5 795.5,212.5 796.5,211.5" fill="none" stroke="#ffff00" stroke-width="1" shape-rendering="crispEdges"/></g></svg><div style="left:3px;top:392px;width:794px;height:25px;background:#000"></div><svg style="left:3px;top:392px" width="20" height="20" viewBox="0 0 20 20" fill="#ffff00"><rect x="0" y="0" width="11" height="1"/><rect x="0" y="0" width="1" height="11"/><rect x="0" y="0" width="2" height="2"/><rect x="2" y="2" width="1" height="1"/><rect x="3" y="3" width="1" height="1"/><rect x="4" y="4" width="1" height="1"/><rect x="5" y="5" width="1" height="1"/><rect x="6" y="6" width="1" height="1"/><rect x="7" y="7" width="1" height="1"/><rect x="8" y="8" width="1" height="1"/><rect x="9" y="9" width="1" height="1"/><rect x="10" y="10" width="1" height="1"/><rect x="11" y="11" width="1" height="1"/><rect x="12" y="12" width="1" height="1"/><rect x="13" y="13" width="1" height="1"/><rect x="14" y="14" width="1" height="1"/></svg><span class="t" style="left:28px;top:396px;color:#0000ff;font-weight:bold;font-size:12px">3s 440ms</span><span class="t" style="left:223px;top:396px;color:#0000ff;font-weight:bold;font-size:12px;letter-spacing:0.25px">tdiv =  100ms/div</span><span class="t" style="left:413px;top:396px;color:#0000ff;font-weight:bold;font-size:12px;letter-spacing:0.25px">t =  250ms</span><svg style="left:403px;top:404px" width="9" height="6" viewBox="0 0 9 6" fill="#0000ff"><rect x="4" y="0" width="1" height="1"/><rect x="3" y="1" width="3" height="1"/><rect x="2" y="2" width="5" height="2"/><rect x="1" y="4" width="7" height="1"/><rect x="0" y="5" width="9" height="1"/></svg><div style="left:3px;top:418px;width:794px;height:50px;background:#000"></div><div style="left:151px;top:418px;width:65px;height:50px;background:#800000"></div><div style="left:3px;top:469px;width:794px;height:50px;background:#800080"></div><svg style="left:0;top:0" width="800" height="520" viewBox="0 0 800 520"><clipPath id="st1"><rect x="3" y="418" width="794" height="50"/></clipPath><clipPath id="st2"><rect x="3" y="469" width="794" height="50"/></clipPath><path d="M12 418 L3 443 L12 468 Z" fill="#800000" shape-rendering="crispEdges"/><path d="M787 418 L797 443 L787 468 Z" fill="#800000" shape-rendering="crispEdges"/><rect x="12" y="418" width="1" height="50" fill="#ff0000"/><rect x="786" y="418" width="1" height="50" fill="#ff0000"/><g clip-path="url(#st1)"><path d="M15.5 439.5H16.5H17.5V438.5H18.5H19.5H20.5H21.5V439.5H22.5H23.5V440.5H24.5V441.5H25.5H26.5V442.5H27.5H28.5H29.5H30.5H31.5H32.5V441.5H33.5V440.5H34.5H35.5V439.5H36.5V438.5H37.5H38.5H39.5H40.5H41.5V439.5H42.5H43.5V440.5H44.5V441.5H45.5V442.5H46.5H47.5H48.5V443.5H49.5V442.5H50.5H51.5H52.5V441.5H53.5V440.5H54.5V439.5H55.5H56.5V438.5H57.5H58.5H59.5H60.5H61.5V439.5H62.5V440.5H63.5H64.5V441.5H65.5V442.5H66.5H67.5V443.5H68.5H69.5H70.5V442.5H71.5V441.5H72.5H73.5V440.5H74.5V439.5H75.5V438.5H76.5H77.5V437.5H78.5H79.5V438.5H80.5H81.5V439.5H82.5V440.5H83.5V441.5H84.5V442.5H85.5V443.5H86.5H87.5V444.5H88.5V443.5H89.5H90.5V442.5H91.5V441.5H92.5V440.5H93.5V439.5H94.5V438.5H95.5V437.5H96.5H97.5H98.5H99.5H100.5V438.5H101.5V439.5H102.5V440.5H103.5V442.5H104.5V443.5H105.5V444.5H106.5H107.5H108.5H109.5V443.5H110.5V442.5H111.5V441.5H112.5V440.5H113.5V438.5H114.5V437.5H115.5V436.5H116.5H117.5H118.5H119.5V437.5H120.5V438.5H121.5V439.5H122.5V441.5H123.5V442.5H124.5V444.5H125.5V445.5H126.5H127.5H128.5H129.5V444.5H130.5V442.5H131.5V441.5H132.5V439.5H133.5V437.5H134.5V436.5H135.5V435.5H136.5H137.5H138.5V436.5H139.5V437.5H140.5V438.5H141.5V440.5H142.5V442.5H143.5V444.5H144.5V445.5H145.5V446.5H146.5H147.5V445.5H148.5V444.5H149.5V443.5H150.5V441.5H151.5V440.5H152.5V439.5H153.5H154.5H155.5V438.5H156.5H157.5H158.5V439.5H159.5H160.5H161.5V440.5H162.5H163.5H164.5V441.5H165.5H166.5H167.5H168.5H169.5H170.5V440.5H171.5H172.5V439.5H173.5H174.5V438.5H175.5H176.5H177.5H178.5H179.5H180.5V439.5H181.5V440.5H182.5H183.5V441.5H184.5H185.5V442.5H186.5H187.5H188.5V441.5H189.5H190.5V440.5H191.5H192.5V439.5H193.5H194.5V438.5H195.5H196.5H197.5H198.5V439.5H199.5H200.5V440.5H201.5V441.5H202.5H203.5H204.5H205.5H206.5H207.5H208.5H209.5H210.5V440.5H211.5V439.5H212.5H213.5H214.5H215.5H216.5H217.5H218.5H219.5H220.5V440.5H221.5V441.5H222.5H223.5H224.5H225.5H226.5H227.5H228.5H229.5V440.5H230.5V439.5H231.5H232.5H233.5H234.5H235.5H236.5H237.5H238.5H239.5V440.5H240.5V441.5H241.5H242.5H243.5H244.5H245.5H246.5H247.5H248.5H249.5V440.5H250.5V439.5H251.5H252.5H253.5H254.5H255.5H256.5H257.5H258.5H259.5V440.5H260.5V441.5H261.5H262.5H263.5H264.5H265.5H266.5H267.5H268.5H269.5V440.5H270.5V439.5H271.5H272.5H273.5H274.5H275.5H276.5H277.5H278.5H279.5V440.5H280.5V441.5H281.5H282.5H283.5H284.5H285.5H286.5H287.5H288.5H289.5V440.5H290.5V439.5H291.5H292.5H293.5V438.5H294.5H295.5V439.5H296.5H297.5H298.5V440.5H299.5V441.5H300.5H301.5H302.5H303.5H304.5H305.5H306.5H307.5H308.5V440.5H309.5V439.5H310.5H311.5H312.5H313.5V438.5H314.5H315.5V439.5H316.5H317.5H318.5V440.5H319.5V441.5H320.5H321.5H322.5H323.5H324.5H325.5H326.5H327.5H328.5V440.5H329.5V439.5H330.5H331.5H332.5V438.5H333.5H334.5H335.5V439.5H336.5H337.5H338.5V440.5H339.5V441.5H340.5H341.5H342.5H343.5H344.5H345.5H346.5H347.5H348.5V440.5H349.5V439.5H350.5H351.5H352.5V438.5H353.5H354.5V439.5H355.5H356.5H357.5H358.5V440.5H359.5V441.5H360.5H361.5H362.5H363.5H364.5H365.5H366.5H367.5V440.5H368.5V439.5H369.5H370.5H371.5H372.5V438.5H373.5H374.5V439.5H375.5H376.5H377.5V440.5H378.5V441.5H379.5H380.5H381.5H382.5H383.5H384.5H385.5H386.5H387.5V440.5H388.5V439.5H389.5H390.5H391.5V438.5H392.5H393.5H394.5V439.5H395.5H396.5H397.5V440.5H398.5V441.5H399.5H400.5V442.5H401.5H402.5H403.5V441.5H404.5H405.5H406.5V440.5H407.5H408.5V439.5H409.5H410.5H411.5H412.5H413.5H414.5V440.5H415.5H416.5V441.5H417.5H418.5V442.5H419.5H420.5H421.5H422.5H423.5H424.5V441.5H425.5V440.5H426.5H427.5V439.5H428.5H429.5H430.5H431.5H432.5H433.5H434.5V440.5H435.5H436.5V441.5H437.5V442.5H438.5H439.5H440.5H441.5H442.5H443.5H444.5V441.5H445.5V440.5H446.5H447.5V439.5H448.5H449.5V438.5H450.5H451.5H452.5V439.5H453.5H454.5V440.5H455.5V441.5H456.5H457.5V442.5H458.5H459.5V443.5H460.5H461.5H462.5V442.5H463.5H464.5V441.5H465.5V440.5H466.5V439.5H467.5H468.5V438.5H469.5H470.5H471.5H472.5H473.5V439.5H474.5V440.5H475.5V441.5H476.5V442.5H477.5V443.5H478.5H479.5V444.5H480.5H481.5H482.5V443.5H483.5V442.5H484.5V441.5H485.5V440.5H486.5V439.5H487.5V438.5H488.5V437.5H489.5H490.5V436.5H491.5V437.5H492.5V438.5H493.5V439.5H494.5V440.5H495.5V441.5H496.5V442.5H497.5V444.5H498.5H499.5V445.5H500.5H501.5V444.5H502.5H503.5V442.5H504.5V441.5H505.5V439.5H506.5V438.5H507.5V437.5H508.5V436.5H509.5V435.5H510.5V436.5H511.5H512.5V437.5H513.5V438.5H514.5V440.5H515.5V442.5H516.5V443.5H517.5V444.5H518.5V445.5H519.5V446.5H520.5H521.5V445.5H522.5V444.5H523.5V442.5H524.5V441.5H525.5V439.5H526.5V437.5H527.5V436.5H528.5V435.5H529.5V434.5H530.5V435.5H531.5H532.5V437.5H533.5V438.5H534.5V440.5H535.5V442.5H536.5V444.5H537.5V446.5H538.5H539.5V447.5H540.5H541.5V446.5H542.5V444.5H543.5V442.5H544.5V440.5H545.5V438.5H546.5V436.5H547.5V435.5H548.5V434.5H549.5V433.5H550.5V434.5H551.5V435.5H552.5V436.5H553.5V438.5H554.5V441.5H555.5V443.5H556.5V446.5H557.5V447.5H558.5V449.5H559.5H560.5H561.5V448.5H562.5V446.5H563.5V443.5H564.5V440.5H565.5V436.5H566.5V432.5H567.5V429.5H568.5V427.5H569.5H570.5H571.5V429.5H572.5V432.5H573.5V437.5H574.5V442.5H575.5V449.5H576.5V454.5H577.5V459.5H578.5V462.5H579.5V464.5H580.5V459.5H581.5V453.5H582.5V447.5H583.5V442.5H584.5V439.5H585.5V438.5H586.5V439.5H587.5H588.5H589.5H590.5H591.5H592.5H593.5H594.5V440.5H595.5V441.5H596.5H597.5H598.5H599.5H600.5H601.5H602.5H603.5H604.5V440.5H605.5V439.5H606.5H607.5H608.5V438.5H609.5H610.5V439.5H611.5H612.5H613.5H614.5V440.5H615.5V441.5H616.5H617.5H618.5H619.5H620.5H621.5H622.5H623.5V440.5H624.5V439.5H625.5H626.5H627.5H628.5V438.5H629.5H630.5V439.5H631.5H632.5H633.5V440.5H634.5V441.5H635.5H636.5H637.5H638.5H639.5H640.5H641.5H642.5H643.5V440.5H644.5V439.5H645.5H646.5H647.5V438.5H648.5H649.5H650.5V439.5H651.5H652.5H653.5V440.5H654.5V441.5H655.5H656.5H657.5H658.5H659.5H660.5H661.5H662.5H663.5V440.5H664.5V439.5H665.5H666.5H667.5V438.5H668.5H669.5V439.5H670.5H671.5H672.5H673.5V440.5H674.5V441.5H675.5H676.5H677.5H678.5H679.5H680.5H681.5H682.5H683.5V440.5H684.5V439.5H685.5H686.5H687.5V438.5H688.5H689.5V439.5H690.5H691.5H692.5V440.5H693.5V441.5H694.5H695.5H696.5H697.5H698.5H699.5H700.5H701.5H702.5V440.5H703.5V439.5H704.5H705.5H706.5H707.5V438.5H708.5H709.5V439.5H710.5H711.5H712.5V440.5H713.5V441.5H714.5H715.5H716.5H717.5H718.5H719.5H720.5H721.5H722.5V440.5H723.5V439.5H724.5H725.5H726.5V438.5H727.5H728.5H729.5V439.5H730.5H731.5H732.5V440.5H733.5V441.5H734.5H735.5H736.5H737.5H738.5H739.5H740.5H741.5H742.5V440.5H743.5V439.5H744.5H745.5H746.5V438.5H747.5H748.5V439.5H749.5H750.5H751.5H752.5V440.5H753.5V441.5H754.5H755.5H756.5H757.5H758.5H759.5H760.5H761.5V440.5H762.5V439.5H763.5H764.5H765.5H766.5V438.5H767.5H768.5V439.5H769.5H770.5H771.5V440.5H772.5V441.5H773.5H774.5H775.5H776.5H777.5H778.5H779.5H780.5H781.5V440.5H782.5V439.5H783.5H784.5H785.5V438.5H786.5" fill="none" stroke="#00ff00" stroke-width="1" shape-rendering="crispEdges"/><path d="M13.5 468H13.5V439.5H14.5H15.5H16.5H17.5H18.5H19.5H20.5H21.5H22.5H23.5H24.5H25.5H26.5H27.5H28.5H29.5H30.5H31.5H32.5H33.5H34.5H35.5H36.5H37.5H38.5H39.5H40.5H41.5H42.5H43.5H44.5H45.5H46.5H47.5H48.5H49.5H50.5H51.5H52.5H53.5H54.5H55.5H56.5H57.5H58.5H59.5H60.5H61.5H62.5H63.5H64.5H65.5H66.5H67.5H68.5H69.5H70.5H71.5H72.5H73.5H74.5H75.5H76.5H77.5H78.5H79.5H80.5H81.5H82.5H83.5H84.5H85.5H86.5H87.5H88.5H89.5H90.5H91.5H92.5H93.5H94.5H95.5H96.5H97.5H98.5H99.5H100.5H101.5H102.5H103.5H104.5H105.5H106.5H107.5H108.5H109.5H110.5H111.5H112.5H113.5H114.5H115.5H116.5H117.5H118.5H119.5H120.5H121.5H122.5H123.5H124.5H125.5H126.5H127.5H128.5H129.5H130.5H131.5H132.5H133.5H134.5H135.5H136.5H137.5H138.5H139.5H140.5H141.5H142.5H143.5H144.5H145.5H146.5H147.5H148.5H149.5H150.5H151.5V438.5H152.5V437.5H153.5V435.5H154.5V433.5H155.5V432.5H156.5H157.5H158.5V434.5H159.5V436.5H160.5V439.5H161.5V442.5H162.5V445.5H163.5V447.5H164.5V449.5H165.5V450.5H166.5H167.5V448.5H168.5V446.5H169.5V443.5H170.5V439.5H171.5V435.5H172.5V432.5H173.5V428.5H174.5V426.5H175.5H176.5V425.5H177.5V426.5H178.5V429.5H179.5V433.5H180.5V439.5H181.5V445.5H182.5V451.5H183.5V457.5H184.5V461.5H185.5V464.5H186.5V460.5H187.5V454.5H188.5V448.5H189.5V443.5H190.5V439.5H191.5H192.5H193.5H194.5H195.5H196.5H197.5H198.5H199.5H200.5H201.5H202.5H203.5H204.5H205.5H206.5H207.5H208.5H209.5H210.5H211.5H212.5H213.5H214.5H215.5H216.5H217.5H218.5H219.5H220.5H221.5H222.5H223.5H224.5H225.5H226.5H227.5H228.5H229.5H230.5H231.5H232.5H233.5H234.5H235.5H236.5H237.5H238.5H239.5H240.5H241.5H242.5H243.5H244.5H245.5H246.5H247.5H248.5H249.5H250.5H251.5H252.5H253.5H254.5H255.5H256.5H257.5H258.5H259.5H260.5H261.5H262.5H263.5H264.5H265.5H266.5H267.5H268.5H269.5H270.5H271.5H272.5H273.5H274.5H275.5H276.5H277.5H278.5H279.5H280.5H281.5H282.5H283.5H284.5H285.5H286.5H287.5H288.5H289.5H290.5H291.5H292.5H293.5H294.5H295.5H296.5H297.5H298.5H299.5H300.5H301.5H302.5H303.5H304.5H305.5H306.5H307.5H308.5H309.5H310.5H311.5H312.5H313.5H314.5H315.5H316.5H317.5H318.5H319.5H320.5H321.5H322.5H323.5H324.5H325.5H326.5H327.5H328.5H329.5H330.5H331.5H332.5H333.5H334.5H335.5H336.5H337.5H338.5H339.5H340.5H341.5H342.5H343.5H344.5H345.5H346.5H347.5H348.5H349.5H350.5H351.5H352.5H353.5H354.5H355.5H356.5H357.5H358.5H359.5H360.5H361.5H362.5H363.5H364.5H365.5H366.5H367.5H368.5H369.5H370.5H371.5H372.5H373.5H374.5H375.5H376.5H377.5H378.5H379.5H380.5H381.5H382.5H383.5H384.5H385.5H386.5H387.5H388.5H389.5H390.5H391.5H392.5H393.5H394.5H395.5H396.5H397.5H398.5H399.5H400.5H401.5H402.5H403.5H404.5H405.5H406.5H407.5H408.5H409.5H410.5H411.5H412.5H413.5H414.5H415.5H416.5H417.5H418.5H419.5H420.5H421.5H422.5H423.5H424.5H425.5H426.5H427.5H428.5H429.5H430.5H431.5H432.5H433.5H434.5H435.5H436.5H437.5H438.5H439.5H440.5H441.5H442.5H443.5H444.5H445.5H446.5H447.5H448.5H449.5H450.5H451.5H452.5H453.5H454.5H455.5H456.5H457.5H458.5H459.5H460.5H461.5H462.5H463.5H464.5H465.5H466.5H467.5H468.5H469.5H470.5H471.5H472.5H473.5H474.5H475.5H476.5H477.5H478.5H479.5H480.5H481.5H482.5H483.5H484.5H485.5H486.5H487.5H488.5H489.5H490.5H491.5H492.5H493.5H494.5H495.5H496.5H497.5H498.5H499.5H500.5H501.5H502.5H503.5H504.5H505.5H506.5H507.5H508.5H509.5H510.5H511.5H512.5H513.5H514.5H515.5H516.5H517.5H518.5H519.5H520.5H521.5H522.5H523.5H524.5H525.5H526.5H527.5H528.5H529.5H530.5H531.5H532.5H533.5H534.5H535.5H536.5V440.5H537.5H538.5V441.5H539.5H540.5H541.5H542.5V440.5H543.5H544.5V439.5H545.5V438.5H546.5H547.5H548.5V437.5H549.5H550.5H551.5V438.5H552.5H553.5H554.5V439.5H555.5V440.5H556.5H557.5H558.5H559.5V441.5H560.5V440.5H561.5H562.5H563.5V439.5H564.5H565.5H566.5V438.5H567.5H568.5H569.5H570.5H571.5H572.5H573.5H574.5V439.5H575.5V440.5H576.5H577.5V441.5H578.5V442.5H579.5H580.5H581.5V441.5H582.5V440.5H583.5H584.5V439.5H585.5H586.5H587.5H588.5H589.5H590.5H591.5H592.5H593.5H594.5H595.5H596.5H597.5H598.5H599.5H600.5H601.5H602.5H603.5H604.5H605.5H606.5H607.5H608.5H609.5H610.5H611.5H612.5H613.5H614.5H615.5H616.5H617.5H618.5H619.5H620.5H621.5H622.5H623.5H624.5H625.5H626.5H627.5H628.5H629.5H630.5H631.5H632.5H633.5H634.5H635.5H636.5H637.5H638.5H639.5H640.5H641.5H642.5H643.5H644.5H645.5H646.5H647.5H648.5H649.5H650.5H651.5H652.5H653.5H654.5H655.5H656.5H657.5H658.5H659.5H660.5H661.5H662.5H663.5H664.5H665.5H666.5H667.5H668.5H669.5H670.5H671.5H672.5H673.5H674.5H675.5H676.5H677.5H678.5H679.5H680.5H681.5H682.5H683.5H684.5H685.5H686.5H687.5H688.5H689.5H690.5H691.5H692.5H693.5H694.5H695.5H696.5H697.5H698.5H699.5H700.5H701.5H702.5H703.5H704.5H705.5H706.5H707.5H708.5H709.5H710.5H711.5H712.5H713.5H714.5H715.5H716.5H717.5H718.5H719.5H720.5H721.5H722.5H723.5H724.5H725.5H726.5H727.5H728.5H729.5H730.5H731.5H732.5H733.5H734.5H735.5H736.5H737.5H738.5H739.5H740.5H741.5H742.5H743.5H744.5H745.5H746.5H747.5H748.5H749.5H750.5H751.5H752.5H753.5H754.5H755.5H756.5H757.5H758.5H759.5H760.5H761.5H762.5H763.5H764.5H765.5H766.5H767.5H768.5H769.5H770.5H771.5H772.5H773.5H774.5H775.5H776.5H777.5H778.5H779.5H780.5H781.5H782.5H783.5H784.5H785.5H786.5" fill="none" stroke="#ffff00" stroke-width="1" shape-rendering="crispEdges"/></g><rect x="3" y="469" width="9" height="50" fill="#000"/><path d="M12 469 L3 494 L12 519 Z" fill="#800080" shape-rendering="crispEdges"/><rect x="787" y="469" width="10" height="50" fill="#000"/><path d="M787 469 L797 494 L787 519 Z" fill="#800080" shape-rendering="crispEdges"/><rect x="12" y="469" width="1" height="50" fill="#ff0000"/><rect x="786" y="469" width="1" height="50" fill="#0000ff"/><g clip-path="url(#st2)"><path d="M15.5 490.5H16.5H17.5V489.5H18.5H19.5H20.5H21.5V490.5H22.5H23.5V491.5H24.5V492.5H25.5H26.5V493.5H27.5H28.5H29.5H30.5H31.5H32.5V492.5H33.5V491.5H34.5H35.5V490.5H36.5V489.5H37.5H38.5H39.5H40.5H41.5V490.5H42.5H43.5V491.5H44.5V492.5H45.5V493.5H46.5H47.5H48.5V494.5H49.5V493.5H50.5H51.5H52.5V492.5H53.5V491.5H54.5V490.5H55.5H56.5V489.5H57.5H58.5H59.5H60.5H61.5V490.5H62.5V491.5H63.5H64.5V492.5H65.5V493.5H66.5H67.5V494.5H68.5H69.5H70.5V493.5H71.5V492.5H72.5H73.5V491.5H74.5V490.5H75.5V489.5H76.5H77.5V488.5H78.5H79.5V489.5H80.5H81.5V490.5H82.5V491.5H83.5V492.5H84.5V493.5H85.5V494.5H86.5H87.5V495.5H88.5V494.5H89.5H90.5V493.5H91.5V492.5H92.5V491.5H93.5V490.5H94.5V489.5H95.5V488.5H96.5H97.5H98.5H99.5H100.5V489.5H101.5V490.5H102.5V491.5H103.5V493.5H104.5V494.5H105.5V495.5H106.5H107.5H108.5H109.5V494.5H110.5V493.5H111.5V492.5H112.5V491.5H113.5V489.5H114.5V488.5H115.5V487.5H116.5H117.5H118.5H119.5V488.5H120.5V489.5H121.5V490.5H122.5V492.5H123.5V493.5H124.5V495.5H125.5V496.5H126.5H127.5H128.5H129.5V495.5H130.5V493.5H131.5V492.5H132.5V490.5H133.5V488.5H134.5V487.5H135.5V486.5H136.5H137.5H138.5V487.5H139.5V488.5H140.5V489.5H141.5V491.5H142.5V493.5H143.5V495.5H144.5V496.5H145.5V497.5H146.5H147.5V496.5H148.5V495.5H149.5V494.5H150.5V492.5H151.5V490.5H152.5V489.5H153.5V487.5H154.5V485.5H155.5V484.5H156.5H157.5H158.5V486.5H159.5V488.5H160.5V491.5H161.5V494.5H162.5V497.5H163.5V499.5H164.5V501.5H165.5V502.5H166.5H167.5V500.5H168.5V498.5H169.5V495.5H170.5V491.5H171.5V487.5H172.5V484.5H173.5V480.5H174.5V478.5H175.5H176.5V477.5H177.5V478.5H178.5V481.5H179.5V485.5H180.5V491.5H181.5V497.5H182.5V503.5H183.5V509.5H184.5V513.5H185.5V516.5H186.5V512.5H187.5V506.5H188.5V500.5H189.5V495.5H190.5V491.5H191.5H192.5H193.5H194.5H195.5H196.5H197.5H198.5H199.5H200.5H201.5V492.5H202.5H203.5H204.5H205.5H206.5H207.5H208.5H209.5H210.5V491.5H211.5V490.5H212.5H213.5H214.5H215.5H216.5H217.5H218.5H219.5H220.5V491.5H221.5V492.5H222.5H223.5H224.5H225.5H226.5H227.5H228.5H229.5V491.5H230.5V490.5H231.5H232.5H233.5H234.5H235.5H236.5H237.5H238.5H239.5V491.5H240.5V492.5H241.5H242.5H243.5H244.5H245.5H246.5H247.5H248.5H249.5V491.5H250.5V490.5H251.5H252.5H253.5H254.5H255.5H256.5H257.5H258.5H259.5V491.5H260.5V492.5H261.5H262.5H263.5H264.5H265.5H266.5H267.5H268.5H269.5V491.5H270.5V490.5H271.5H272.5H273.5H274.5H275.5H276.5H277.5H278.5H279.5V491.5H280.5V492.5H281.5H282.5H283.5H284.5H285.5H286.5H287.5H288.5H289.5V491.5H290.5V490.5H291.5H292.5H293.5V489.5H294.5H295.5V490.5H296.5H297.5H298.5V491.5H299.5V492.5H300.5H301.5H302.5H303.5H304.5H305.5H306.5H307.5H308.5V491.5H309.5V490.5H310.5H311.5H312.5H313.5V489.5H314.5H315.5V490.5H316.5H317.5H318.5V491.5H319.5V492.5H320.5H321.5H322.5H323.5H324.5H325.5H326.5H327.5H328.5V491.5H329.5V490.5H330.5H331.5H332.5V489.5H333.5H334.5H335.5V490.5H336.5H337.5H338.5V491.5H339.5V492.5H340.5H341.5H342.5H343.5H344.5H345.5H346.5H347.5H348.5V491.5H349.5V490.5H350.5H351.5H352.5V489.5H353.5H354.5V490.5H355.5H356.5H357.5H358.5V491.5H359.5V492.5H360.5H361.5H362.5H363.5H364.5H365.5H366.5H367.5V491.5H368.5V490.5H369.5H370.5H371.5H372.5V489.5H373.5H374.5V490.5H375.5H376.5H377.5V491.5H378.5V492.5H379.5H380.5H381.5H382.5H383.5H384.5H385.5H386.5H387.5V491.5H388.5V490.5H389.5H390.5H391.5V489.5H392.5H393.5H394.5V490.5H395.5H396.5H397.5V491.5H398.5V492.5H399.5H400.5V493.5H401.5H402.5H403.5V492.5H404.5H405.5H406.5V491.5H407.5H408.5V490.5H409.5H410.5H411.5H412.5H413.5H414.5V491.5H415.5H416.5V492.5H417.5H418.5V493.5H419.5H420.5H421.5H422.5H423.5H424.5V492.5H425.5V491.5H426.5H427.5V490.5H428.5H429.5H430.5H431.5H432.5H433.5H434.5V491.5H435.5H436.5V492.5H437.5V493.5H438.5H439.5H440.5H441.5H442.5H443.5H444.5V492.5H445.5V491.5H446.5H447.5V490.5H448.5H449.5V489.5H450.5H451.5H452.5V490.5H453.5H454.5V491.5H455.5V492.5H456.5H457.5V493.5H458.5H459.5V494.5H460.5H461.5H462.5V493.5H463.5H464.5V492.5H465.5V491.5H466.5V490.5H467.5H468.5V489.5H469.5H470.5H471.5H472.5H473.5V490.5H474.5V491.5H475.5V492.5H476.5V493.5H477.5V494.5H478.5H479.5V495.5H480.5H481.5H482.5V494.5H483.5V493.5H484.5V492.5H485.5V491.5H486.5V490.5H487.5V489.5H488.5V488.5H489.5H490.5V487.5H491.5V488.5H492.5V489.5H493.5V490.5H494.5V491.5H495.5V492.5H496.5V493.5H497.5V495.5H498.5H499.5V496.5H500.5H501.5V495.5H502.5H503.5V493.5H504.5V492.5H505.5V490.5H506.5V489.5H507.5V488.5H508.5V487.5H509.5V486.5H510.5V487.5H511.5H512.5V488.5H513.5V489.5H514.5V491.5H515.5V493.5H516.5V494.5H517.5V495.5H518.5V496.5H519.5V497.5H520.5H521.5V496.5H522.5V495.5H523.5V493.5H524.5V492.5H525.5V490.5H526.5V488.5H527.5V487.5H528.5V486.5H529.5V485.5H530.5V486.5H531.5H532.5V488.5H533.5V489.5H534.5V491.5H535.5V493.5H536.5V495.5H537.5V497.5H538.5H539.5V498.5H540.5H541.5V497.5H542.5V495.5H543.5V493.5H544.5V491.5H545.5V489.5H546.5V487.5H547.5V486.5H548.5V485.5H549.5V484.5H550.5V485.5H551.5V486.5H552.5V487.5H553.5V489.5H554.5V492.5H555.5V494.5H556.5V497.5H557.5V498.5H558.5V500.5H559.5H560.5H561.5V499.5H562.5V497.5H563.5V494.5H564.5V491.5H565.5V487.5H566.5V483.5H567.5V480.5H568.5V478.5H569.5H570.5H571.5V480.5H572.5V483.5H573.5V488.5H574.5V493.5H575.5V500.5H576.5V505.5H577.5V510.5H578.5V513.5H579.5V515.5H580.5V510.5H581.5V504.5H582.5V498.5H583.5V493.5H584.5V490.5H585.5V489.5H586.5V490.5H587.5H588.5H589.5H590.5H591.5H592.5H593.5H594.5V491.5H595.5V492.5H596.5H597.5H598.5H599.5H600.5H601.5H602.5H603.5H604.5V491.5H605.5V490.5H606.5H607.5H608.5V489.5H609.5H610.5V490.5H611.5H612.5H613.5H614.5V491.5H615.5V492.5H616.5H617.5H618.5H619.5H620.5H621.5H622.5H623.5V491.5H624.5V490.5H625.5H626.5H627.5H628.5V489.5H629.5H630.5V490.5H631.5H632.5H633.5V491.5H634.5V492.5H635.5H636.5H637.5H638.5H639.5H640.5H641.5H642.5H643.5V491.5H644.5V490.5H645.5H646.5H647.5V489.5H648.5H649.5H650.5V490.5H651.5H652.5H653.5V491.5H654.5V492.5H655.5H656.5H657.5H658.5H659.5H660.5H661.5H662.5H663.5V491.5H664.5V490.5H665.5H666.5H667.5V489.5H668.5H669.5V490.5H670.5H671.5H672.5H673.5V491.5H674.5V492.5H675.5H676.5H677.5H678.5H679.5H680.5H681.5H682.5H683.5V491.5H684.5V490.5H685.5H686.5H687.5V489.5H688.5H689.5V490.5H690.5H691.5H692.5V491.5H693.5V492.5H694.5H695.5H696.5H697.5H698.5H699.5H700.5H701.5H702.5V491.5H703.5V490.5H704.5H705.5H706.5H707.5V489.5H708.5H709.5V490.5H710.5H711.5H712.5V491.5H713.5V492.5H714.5H715.5H716.5H717.5H718.5H719.5H720.5H721.5H722.5V491.5H723.5V490.5H724.5H725.5H726.5V489.5H727.5H728.5H729.5V490.5H730.5H731.5H732.5V491.5H733.5V492.5H734.5H735.5H736.5H737.5H738.5H739.5H740.5H741.5H742.5V491.5H743.5V490.5H744.5H745.5H746.5V489.5H747.5H748.5V490.5H749.5H750.5H751.5H752.5V491.5H753.5V492.5H754.5H755.5H756.5H757.5H758.5H759.5H760.5H761.5V491.5H762.5V490.5H763.5H764.5H765.5H766.5V489.5H767.5H768.5V490.5H769.5H770.5H771.5V491.5H772.5V492.5H773.5H774.5H775.5H776.5H777.5H778.5H779.5H780.5H781.5V491.5H782.5V490.5H783.5H784.5H785.5V489.5H786.5" fill="none" stroke="#ffffff" stroke-width="1" shape-rendering="crispEdges"/><path d="M13.5 519H13.5V490.5H14.5H15.5H16.5H17.5H18.5H19.5H20.5H21.5H22.5H23.5H24.5H25.5H26.5H27.5H28.5H29.5H30.5H31.5H32.5H33.5H34.5H35.5H36.5H37.5H38.5H39.5H40.5H41.5H42.5H43.5H44.5H45.5H46.5H47.5H48.5H49.5H50.5H51.5H52.5H53.5H54.5H55.5H56.5H57.5H58.5H59.5H60.5H61.5H62.5H63.5H64.5H65.5H66.5H67.5H68.5H69.5H70.5H71.5H72.5H73.5H74.5H75.5H76.5H77.5H78.5H79.5H80.5H81.5H82.5H83.5H84.5H85.5H86.5H87.5H88.5H89.5H90.5H91.5H92.5H93.5H94.5H95.5H96.5H97.5H98.5H99.5H100.5H101.5H102.5H103.5H104.5H105.5H106.5H107.5H108.5H109.5H110.5H111.5H112.5H113.5H114.5H115.5H116.5H117.5H118.5H119.5H120.5H121.5H122.5H123.5H124.5H125.5H126.5H127.5H128.5H129.5H130.5H131.5H132.5H133.5H134.5H135.5H136.5H137.5H138.5H139.5H140.5H141.5H142.5H143.5H144.5H145.5H146.5H147.5H148.5H149.5H150.5H151.5H152.5V489.5H153.5H154.5H155.5V488.5H156.5H157.5H158.5V489.5H159.5H160.5H161.5V490.5H162.5H163.5H164.5V491.5H165.5H166.5H167.5H168.5H169.5H170.5V490.5H171.5H172.5V489.5H173.5H174.5V488.5H175.5H176.5H177.5H178.5H179.5H180.5V489.5H181.5V490.5H182.5H183.5V491.5H184.5H185.5V492.5H186.5H187.5H188.5V491.5H189.5H190.5V490.5H191.5H192.5V489.5H193.5H194.5V488.5H195.5H196.5H197.5H198.5V489.5H199.5H200.5V490.5H201.5H202.5H203.5H204.5H205.5H206.5H207.5H208.5H209.5H210.5H211.5H212.5H213.5H214.5H215.5H216.5H217.5H218.5H219.5H220.5H221.5H222.5H223.5H224.5H225.5H226.5H227.5H228.5H229.5H230.5H231.5H232.5H233.5H234.5H235.5H236.5H237.5H238.5H239.5H240.5H241.5H242.5H243.5H244.5H245.5H246.5H247.5H248.5H249.5H250.5H251.5H252.5H253.5H254.5H255.5H256.5H257.5H258.5H259.5H260.5H261.5H262.5H263.5H264.5H265.5H266.5H267.5H268.5H269.5H270.5H271.5H272.5H273.5H274.5H275.5H276.5H277.5H278.5H279.5H280.5H281.5H282.5H283.5H284.5H285.5H286.5H287.5H288.5H289.5H290.5H291.5H292.5H293.5H294.5H295.5H296.5H297.5H298.5H299.5H300.5H301.5H302.5H303.5H304.5H305.5H306.5H307.5H308.5H309.5H310.5H311.5H312.5H313.5H314.5H315.5H316.5H317.5H318.5H319.5H320.5H321.5H322.5H323.5H324.5H325.5H326.5H327.5H328.5H329.5H330.5H331.5H332.5H333.5H334.5H335.5H336.5H337.5H338.5H339.5H340.5H341.5H342.5H343.5H344.5H345.5H346.5H347.5H348.5H349.5H350.5H351.5H352.5H353.5H354.5H355.5H356.5H357.5H358.5H359.5H360.5H361.5H362.5H363.5H364.5H365.5H366.5H367.5H368.5H369.5H370.5H371.5H372.5H373.5H374.5H375.5H376.5H377.5H378.5H379.5H380.5H381.5H382.5H383.5H384.5H385.5H386.5H387.5H388.5H389.5H390.5H391.5H392.5H393.5H394.5H395.5H396.5H397.5H398.5H399.5H400.5H401.5H402.5H403.5H404.5H405.5H406.5H407.5H408.5H409.5H410.5H411.5H412.5H413.5H414.5H415.5H416.5H417.5H418.5H419.5H420.5H421.5H422.5H423.5H424.5H425.5H426.5H427.5H428.5H429.5H430.5H431.5H432.5H433.5H434.5H435.5H436.5H437.5H438.5H439.5H440.5H441.5H442.5H443.5H444.5H445.5H446.5H447.5H448.5H449.5H450.5H451.5H452.5H453.5H454.5H455.5H456.5H457.5H458.5H459.5H460.5H461.5H462.5H463.5H464.5H465.5H466.5H467.5H468.5H469.5H470.5H471.5H472.5H473.5H474.5H475.5H476.5H477.5H478.5H479.5H480.5H481.5H482.5H483.5H484.5H485.5H486.5H487.5H488.5H489.5H490.5H491.5H492.5H493.5H494.5H495.5H496.5H497.5H498.5H499.5H500.5H501.5H502.5H503.5H504.5H505.5H506.5H507.5H508.5H509.5H510.5H511.5H512.5H513.5H514.5H515.5H516.5H517.5H518.5H519.5H520.5H521.5H522.5H523.5H524.5H525.5H526.5H527.5H528.5H529.5H530.5H531.5H532.5H533.5H534.5H535.5H536.5V491.5H537.5H538.5V492.5H539.5H540.5H541.5H542.5V491.5H543.5H544.5V490.5H545.5V489.5H546.5H547.5H548.5V488.5H549.5H550.5H551.5V489.5H552.5H553.5H554.5V490.5H555.5V491.5H556.5H557.5H558.5H559.5V492.5H560.5V491.5H561.5H562.5H563.5V490.5H564.5H565.5H566.5V489.5H567.5H568.5H569.5V488.5H570.5V489.5H571.5H572.5H573.5H574.5V490.5H575.5V491.5H576.5H577.5V492.5H578.5V493.5H579.5H580.5H581.5V492.5H582.5V491.5H583.5H584.5V490.5H585.5H586.5H587.5H588.5H589.5H590.5H591.5H592.5H593.5H594.5H595.5H596.5H597.5H598.5H599.5H600.5H601.5H602.5H603.5H604.5H605.5H606.5H607.5H608.5H609.5H610.5H611.5H612.5H613.5H614.5H615.5H616.5H617.5H618.5H619.5H620.5H621.5H622.5H623.5H624.5H625.5H626.5H627.5H628.5H629.5H630.5H631.5H632.5H633.5H634.5H635.5H636.5H637.5H638.5H639.5H640.5H641.5H642.5H643.5H644.5H645.5H646.5H647.5H648.5H649.5H650.5H651.5H652.5H653.5H654.5H655.5H656.5H657.5H658.5H659.5H660.5H661.5H662.5H663.5H664.5H665.5H666.5H667.5H668.5H669.5H670.5H671.5H672.5H673.5H674.5H675.5H676.5H677.5H678.5H679.5H680.5H681.5H682.5H683.5H684.5H685.5H686.5H687.5H688.5H689.5H690.5H691.5H692.5H693.5H694.5H695.5H696.5H697.5H698.5H699.5H700.5H701.5H702.5H703.5H704.5H705.5H706.5H707.5H708.5H709.5H710.5H711.5H712.5H713.5H714.5H715.5H716.5H717.5H718.5H719.5H720.5H721.5H722.5H723.5H724.5H725.5H726.5H727.5H728.5H729.5H730.5H731.5H732.5H733.5H734.5H735.5H736.5H737.5H738.5H739.5H740.5H741.5H742.5H743.5H744.5H745.5H746.5H747.5H748.5H749.5H750.5H751.5H752.5H753.5H754.5H755.5H756.5H757.5H758.5H759.5H760.5H761.5H762.5H763.5H764.5H765.5H766.5H767.5H768.5H769.5H770.5H771.5H772.5H773.5H774.5H775.5H776.5H777.5H778.5H779.5H780.5H781.5H782.5H783.5H784.5H785.5H786.5" fill="none" stroke="#00ffff" stroke-width="1" shape-rendering="crispEdges"/></g></svg><div style="left:98px;top:524px;width:157px;height:71px;box-sizing:border-box;border-top:1px solid #808080;border-left:1px solid #808080;border-bottom:1px solid #ffffff;border-right:1px solid #ffffff"></div><div style="left:99px;top:525px;width:155px;height:69px;box-sizing:border-box;border-top:1px solid #ffffff;border-left:1px solid #ffffff;border-bottom:1px solid #808080;border-right:1px solid #808080"></div><div style="left:106px;top:520px;width:30px;height:12px;background:#d4d0c8;"></div><span class="t" style="left:109.08px;top:520px;font-size:12px;transform:scaleX(0.9200);transform-origin:0 0;">Load</span><div style="left:106px;top:536px;width:113px;height:21px;background:#ffffff;box-shadow:inset 1px 1px #808080,inset -1px -1px #ffffff,inset 2px 2px #404040,inset -2px -2px #d4d0c8;"></div><span class="t" style="left:109.13px;top:540px;font-size:12px;transform:scaleX(0.8654);transform-origin:0 0;">sdata.rmd</span><div style="left:234px;top:536px;width:17px;height:22px;background:#d4d0c8;box-shadow:inset -1px -1px #404040,inset 1px 1px #ffffff,inset -2px -2px #808080;"></div><div style="left:240px;top:543px;width:5px;height:1px;background:#000;"></div><div style="left:240px;top:546px;width:5px;height:1px;background:#000;"></div><div style="left:240px;top:549px;width:5px;height:1px;background:#000;"></div><div style="left:240px;top:552px;width:5px;height:1px;background:#000;"></div><span class="t" style="left:105.12px;top:568px;font-size:12px;transform:scaleX(0.8800);transform-origin:0 0;">Size:</span><span class="t" style="left:146.10px;top:568px;font-size:12px;transform:scaleX(0.9024);transform-origin:0 0;">19.1 KB</span><div style="left:208px;top:561px;width:43px;height:22px;background:#d4d0c8;box-shadow:inset -1px -1px #404040,inset 1px 1px #ffffff,inset -2px -2px #808080;"></div><span class="t" style="left:208.07px;top:567px;font-size:12px;transform:scaleX(0.9286);transform-origin:0 0;">Open</span><div style="left:241px;top:572px;width:4px;height:4px;background:#f04800;box-shadow:0 -1px #000,0 1px #000,-1px 0 #000,1px 0 #000"></div><div style="left:255px;top:524px;width:86px;height:71px;box-sizing:border-box;border-top:1px solid #808080;border-left:1px solid #808080;border-bottom:1px solid #ffffff;border-right:1px solid #ffffff"></div><div style="left:256px;top:525px;width:84px;height:69px;box-sizing:border-box;border-top:1px solid #ffffff;border-left:1px solid #ffffff;border-bottom:1px solid #808080;border-right:1px solid #808080"></div><div style="left:263px;top:520px;width:40px;height:12px;background:#d4d0c8;"></div><span class="t" style="left:266.11px;top:520px;font-size:12px;transform:scaleX(0.8947);transform-origin:0 0;">Display</span><div class="dith" style="left:258px;top:538px;width:38px;height:22px;box-shadow:inset 1px 1px #404040,inset -1px -1px #ffffff,inset 2px 2px #808080;"></div><div class="dith" style="left:298px;top:538px;width:38px;height:22px;box-shadow:inset 1px 1px #404040,inset -1px -1px #ffffff,inset 2px 2px #808080;"></div><span class="t" style="left:273.00px;top:545px;font-size:12px;transform:scaleX(0.8750);transform-origin:0 0;">A</span><span class="t" style="left:313.17px;top:545px;font-size:12px;transform:scaleX(0.8333);transform-origin:0 0;">B</span><div style="left:287px;top:546px;width:4px;height:4px;background:#99dd00;box-shadow:0 -1px #000,0 1px #000,-1px 0 #000,1px 0 #000"></div><div style="left:327px;top:546px;width:4px;height:4px;background:#99dd00;box-shadow:0 -1px #000,0 1px #000,-1px 0 #000,1px 0 #000"></div><div style="left:258px;top:565px;width:38px;height:22px;background:#d4d0c8;box-shadow:inset -1px -1px #404040,inset 1px 1px #ffffff,inset -2px -2px #808080;"></div><div style="left:298px;top:565px;width:38px;height:22px;background:#d4d0c8;box-shadow:inset -1px -1px #404040,inset 1px 1px #ffffff,inset -2px -2px #808080;"></div><div style="left:286px;top:576px;width:4px;height:4px;background:#f04800;box-shadow:0 -1px #000,0 1px #000,-1px 0 #000,1px 0 #000"></div><div style="left:326px;top:576px;width:4px;height:4px;background:#f04800;box-shadow:0 -1px #000,0 1px #000,-1px 0 #000,1px 0 #000"></div><div style="left:341px;top:524px;width:86px;height:71px;box-sizing:border-box;border-top:1px solid #808080;border-left:1px solid #808080;border-bottom:1px solid #ffffff;border-right:1px solid #ffffff"></div><div style="left:342px;top:525px;width:84px;height:69px;box-sizing:border-box;border-top:1px solid #ffffff;border-left:1px solid #ffffff;border-bottom:1px solid #808080;border-right:1px solid #808080"></div><div style="left:349px;top:520px;width:56px;height:12px;background:#d4d0c8;"></div><span class="t" style="left:352.04px;top:520px;font-size:12px;transform:scaleX(0.9615);transform-origin:0 0;">DSP/SMP</span><div style="left:346px;top:535px;width:38px;height:22px;background:#d4d0c8;box-shadow:inset -1px -1px #404040,inset 1px 1px #ffffff,inset -2px -2px #808080;"></div><div class="dith" style="left:384px;top:535px;width:38px;height:22px;box-shadow:inset 1px 1px #404040,inset -1px -1px #ffffff,inset 2px 2px #808080;"></div><span class="t" style="left:349.11px;top:540px;font-size:9px;font-weight:bold;transform:scaleX(0.8889);transform-origin:0 0;">SNG</span><span class="t" style="left:390.00px;top:542px;font-size:9px;transform:scaleX(0.9412);transform-origin:0 0;">Calc</span><div style="left:374px;top:546px;width:4px;height:4px;background:#f04800;box-shadow:0 -1px #000,0 1px #000,-1px 0 #000,1px 0 #000"></div><div style="left:413px;top:543px;width:4px;height:4px;background:#99dd00;box-shadow:0 -1px #000,0 1px #000,-1px 0 #000,1px 0 #000"></div><div style="left:346px;top:561px;width:24px;height:30px;background:#d4d0c8;box-shadow:inset -1px -1px #404040,inset 1px 1px #ffffff,inset -2px -2px #808080;"></div><div class="dith" style="left:372px;top:561px;width:24px;height:30px;box-shadow:inset 1px 1px #404040,inset -1px -1px #ffffff,inset 2px 2px #808080;"></div><div style="left:398px;top:561px;width:24px;height:30px;background:#d4d0c8;box-shadow:inset -1px -1px #404040,inset 1px 1px #ffffff,inset -2px -2px #808080;"></div><svg style="left:346px;top:561px" width="24" height="30" viewBox="0 0 24 30" fill="#000"><rect x="9" y="8" width="2" height="1"/><rect x="9" y="9" width="2" height="1"/><rect x="9" y="10" width="2" height="1"/><rect x="9" y="11" width="2" height="1"/><rect x="9" y="12" width="2" height="1"/><rect x="9" y="13" width="2" height="1"/><rect x="9" y="14" width="2" height="1"/><rect x="9" y="15" width="2" height="1"/><rect x="9" y="16" width="2" height="1"/><rect x="9" y="17" width="2" height="1"/><rect x="9" y="18" width="2" height="1"/><rect x="8" y="19" width="4" height="1"/><rect x="7" y="20" width="6" height="1"/><rect x="6" y="21" width="2" height="1"/><rect x="12" y="21" width="2" height="1"/><rect x="5" y="22" width="2" height="1"/><rect x="13" y="22" width="2" height="1"/></svg><div style="left:362px;top:577px;width:4px;height:4px;background:#f04800;box-shadow:0 -1px #000,0 1px #000,-1px 0 #000,1px 0 #000"></div><svg style="left:372px;top:561px" width="24" height="30" viewBox="0 0 24 30"><rect x="12" y="9" width="2" height="8" fill="#000"/><rect x="10" y="16" width="2" height="8" fill="#000"/><rect x="9" y="16" width="7" height="1" fill="#000"/></svg><div style="left:389px;top:573px;width:4px;height:4px;background:#99dd00;box-shadow:0 -1px #000,0 1px #000,-1px 0 #000,1px 0 #000"></div><svg style="left:398px;top:561px" width="24" height="30" viewBox="0 0 24 30" fill="#000"><rect x="9" y="12" width="2" height="1"/><rect x="9" y="13" width="2" height="1"/><rect x="9" y="14" width="2" height="1"/><rect x="9" y="15" width="2" height="1"/><rect x="9" y="16" width="2" height="1"/><rect x="9" y="17" width="2" height="1"/><rect x="9" y="18" width="2" height="1"/><rect x="9" y="19" width="2" height="1"/><rect x="9" y="20" width="2" height="1"/><rect x="9" y="21" width="2" height="1"/><rect x="9" y="22" width="2" height="1"/><rect x="8" y="11" width="4" height="1"/><rect x="7" y="10" width="6" height="1"/><rect x="6" y="9" width="2" height="1"/><rect x="12" y="9" width="2" height="1"/><rect x="5" y="8" width="2" height="1"/><rect x="13" y="8" width="2" height="1"/></svg><div style="left:414px;top:577px;width:4px;height:4px;background:#f04800;box-shadow:0 -1px #000,0 1px #000,-1px 0 #000,1px 0 #000"></div><div style="left:427px;top:524px;width:89px;height:71px;box-sizing:border-box;border-top:1px solid #808080;border-left:1px solid #808080;border-bottom:1px solid #ffffff;border-right:1px solid #ffffff"></div><div style="left:428px;top:525px;width:87px;height:69px;box-sizing:border-box;border-top:1px solid #ffffff;border-left:1px solid #ffffff;border-bottom:1px solid #808080;border-right:1px solid #808080"></div><div style="left:434px;top:520px;width:28px;height:12px;background:#d4d0c8;"></div><span class="t" style="left:435.00px;top:520px;font-size:12px;transform:scaleX(0.9333);transform-origin:0 0;">Zoom</span><div class="dith" style="left:431px;top:535px;width:77px;height:22px;box-shadow:inset 1px 1px #404040,inset -1px -1px #ffffff,inset 2px 2px #808080;"></div><span class="t" style="left:477.13px;top:542px;font-size:12px;transform:scaleX(0.8667);transform-origin:0 0;">1:1</span><div style="left:499px;top:543px;width:4px;height:4px;background:#99dd00;box-shadow:0 -1px #000,0 1px #000,-1px 0 #000,1px 0 #000"></div><div style="left:431px;top:565px;width:33px;height:22px;background:#d4d0c8;box-shadow:inset -1px -1px #404040,inset 1px 1px #ffffff,inset -2px -2px #808080;"></div><div style="left:475px;top:565px;width:33px;height:22px;background:#d4d0c8;box-shadow:inset -1px -1px #404040,inset 1px 1px #ffffff,inset -2px -2px #808080;"></div><div style="left:445px;top:576px;width:5px;height:1px;background:#000;"></div><div style="left:488px;top:574px;width:8px;height:1px;background:#000;"></div><div style="left:491px;top:571px;width:1px;height:8px;background:#000;"></div><div style="left:516px;top:524px;width:185px;height:71px;box-sizing:border-box;border-top:1px solid #808080;border-left:1px solid #808080;border-bottom:1px solid #ffffff;border-right:1px solid #ffffff"></div><div style="left:517px;top:525px;width:183px;height:69px;box-sizing:border-box;border-top:1px solid #ffffff;border-left:1px solid #ffffff;border-bottom:1px solid #808080;border-right:1px solid #808080"></div><div style="left:524px;top:520px;width:47px;height:12px;background:#d4d0c8;"></div><span class="t" style="left:527.13px;top:520px;font-size:12px;transform:scaleX(0.8723);transform-origin:0 0;">Progress</span><div style="left:532px;top:537px;width:153px;height:17px;box-sizing:border-box;border:1px solid #000;background:#0000ff"></div><span class="t" style="left:595.10px;top:539px;font-size:12px;color:#ffff00;transform:scaleX(0.8966);transform-origin:0 0;">100%</span><span class="t" style="left:532.12px;top:566px;font-size:12px;transform:scaleX(0.8824);transform-origin:0 0;">Ready</span>
</body></html>
